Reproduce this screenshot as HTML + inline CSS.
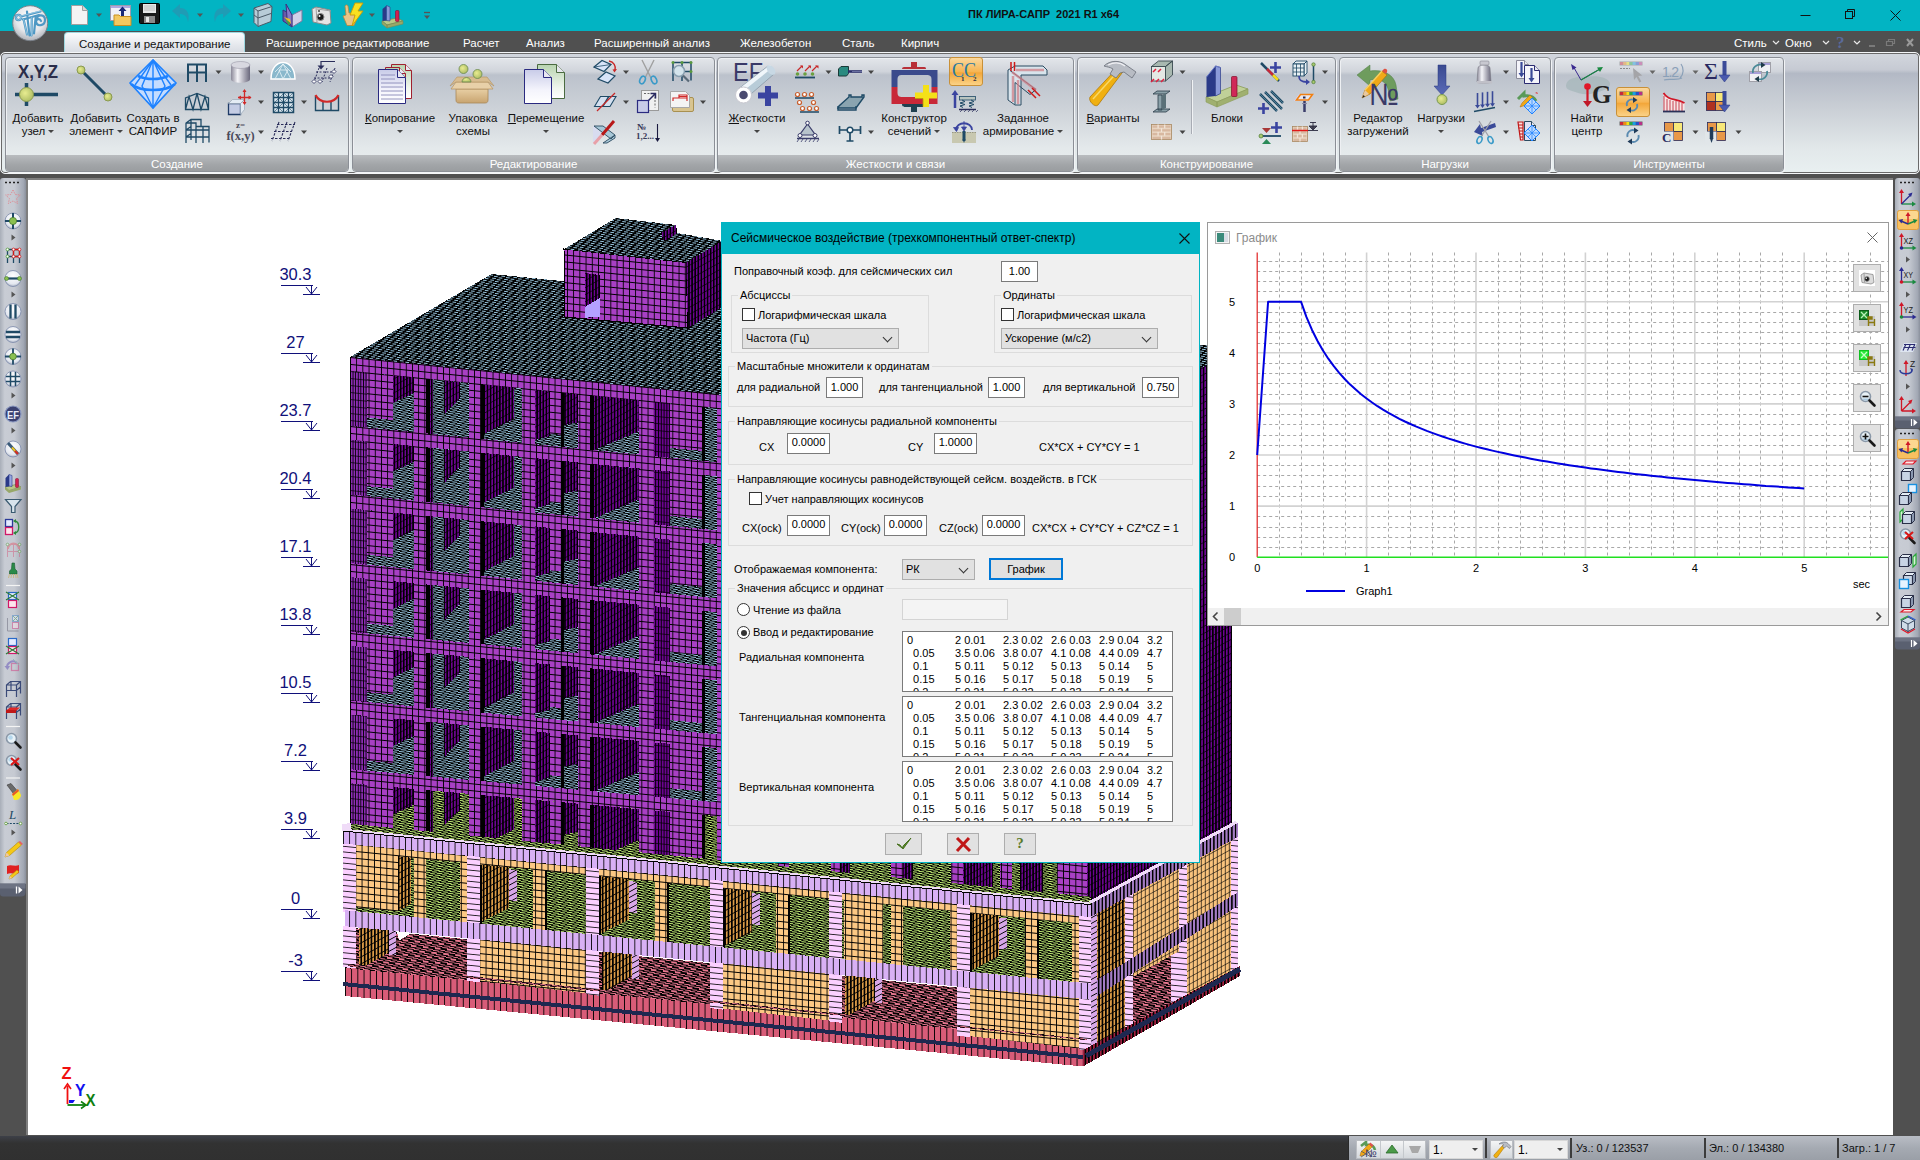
<!DOCTYPE html>
<html lang="ru"><head><meta charset="utf-8"><title>ПК ЛИРА-САПР 2021 R1 x64</title>
<style>
*{box-sizing:border-box}
html,body{margin:0;padding:0}
body{width:1920px;height:1160px;position:relative;overflow:hidden;background:#505050;font-family:"Liberation Sans",sans-serif;font-size:11.5px;color:#000}
.a{position:absolute}
#title{left:0;top:0;width:1920px;height:31px;background:#02b4c3}
#title .cap{left:968px;top:8px;font-weight:bold;font-size:11px;color:#111;white-space:pre}
#tabs{left:0;top:31px;width:1920px;height:22px;background:#505050}
.tab{position:absolute;top:6px;color:#fff;font-size:11.5px;white-space:nowrap}
#tab0{left:64px;top:1px;width:181px;height:22px;border-radius:4px 4px 0 0;background:linear-gradient(#fbfcfd,#e4e7ec 60%,#d6dae1);border:1px solid #9fd8e0;border-bottom:none;color:#111;font-size:11.5px;padding:5px 0 0 14px;white-space:nowrap}
#ribbon{left:0;top:52px;width:1920px;height:122px;border-radius:5px;background:linear-gradient(#d3d7de 0,#c6cad3 14%,#b3b9c5 17%,#c9ced5 45%,#e2e8ea 80%,#e9f0f1 100%);border:1px solid #f4f6f8;box-shadow:0 0 0 1px #6a6a6a inset}
.grp{position:absolute;top:4px;height:115px;border-radius:4px;border:1px solid #8b8f96;background:linear-gradient(#e3e6ea 0,#d0d4db 12%,#bcc2cc 15%,#cdd2d8 45%,#e4e9eb 80%,#e8eeef 100%);box-shadow:1px 1px 0 #f2f4f6, inset 1px 1px 0 #eef0f3;overflow:hidden}
.grp .lbl{position:absolute;left:0;right:0;bottom:0;height:16px;background:linear-gradient(#b9bcbf,#a2a5a8 60%,#9a9da0);color:#fff;text-align:center;font-size:11.5px;line-height:18px}
.rt{position:absolute;font-size:11.5px;color:#111;text-align:center;line-height:13px;white-space:nowrap}
.rt .dd{position:static;display:inline-block;margin:0 0 1px 3px;vertical-align:middle}
.dd{position:absolute;width:0;height:0;border-left:3px solid transparent;border-right:3px solid transparent;border-top:3.5px solid #444}
#ltb{left:0;top:178px;width:26px;height:706px;background:linear-gradient(90deg,#a8aeb8,#c8ccd4 18%,#c6cad2 55%,#a2a8b4 90%,#8a909c);border-radius:3px 3px 0 0}
#canvas{left:26px;top:178px;width:1867px;height:957px;background:#fff;border-left:2px solid #7e7e7e;border-top:2px solid #7e7e7e;overflow:hidden}
.rtb{position:absolute;left:1895px;width:25px;background:linear-gradient(90deg,#a8aeb8,#c8ccd4 18%,#c6cad2 55%,#a2a8b4 90%,#8a909c);border-radius:3px 3px 0 0}
#status{left:0;top:1136px;width:1920px;height:24px;background:linear-gradient(#3d4048,#323232 30%,#303030)}
#sright{left:1348px;top:0;width:572px;height:24px;background:linear-gradient(#b9bdc5,#a5aab2 50%,#9a9fa7);border-left:1px solid #2a2a2a}
.sbtn{position:absolute;top:4px;height:19px;background:linear-gradient(#f4f5f6,#d4d8dc);border:1px solid #babdc2}
.scmb{position:absolute;top:4px;height:19px;width:54px;background:#efefef;border:1px solid #d8d8d8;font-size:12px;padding:2px 0 0 3px}
.ssep{position:absolute;top:2px;width:2px;height:20px;background:#3c3c3c}
.stxt{position:absolute;top:6px;font-size:11px;color:#111;white-space:nowrap}
/* dialog */
#dlg{left:721px;top:222px;width:479px;height:641px;background:#f0f0f0;border:1px solid #02b4c3;font-size:11px;color:#000}
#dlg .tb{position:absolute;left:0;top:0;width:477px;height:31px;background:#02b4c3}
#dlg .tb span{position:absolute;left:9px;top:8px;font-size:12px;white-space:nowrap}
.t{position:absolute;white-space:nowrap;font-size:11px}
.gb{position:absolute;border:1px solid #dcdcdc}
.gb>i{position:absolute;top:-7px;left:5px;background:#f0f0f0;padding:0 2px;font-style:normal;white-space:nowrap}
.ed{position:absolute;background:#fff;border:1px solid #7a7a7a;height:21px;font-size:11px;text-align:center;padding-top:3px}
.cb{position:absolute;width:13px;height:13px;background:#fff;border:1px solid #333}
.cmb{position:absolute;height:21px;background:#e1e1e1;border:1px solid #adadad;padding:3px 0 0 3px;white-space:nowrap}
.cmb:after{content:"";position:absolute;right:7px;top:5px;width:6px;height:6px;border-right:1px solid #333;border-bottom:1px solid #333;transform:rotate(45deg)}
.rad{position:absolute;width:13px;height:13px;border-radius:50%;background:#fff;border:1px solid #333}
.rad.on:after{content:"";position:absolute;left:2.5px;top:2.5px;width:6px;height:6px;border-radius:50%;background:#333}
.ta{position:absolute;left:181px;width:270px;height:62px;background:#fff;border:1px solid #7a7a7a;overflow:hidden;font-size:11px;line-height:13px;white-space:pre}
.ta span{position:absolute;white-space:pre}
.btn{position:absolute;height:21px;background:#e1e1e1;border:1px solid #adadad}
/* graph */
#gr{left:1207px;top:222px;width:682px;height:404px;background:#fff;border:1px solid #9a9a9a}
.gbtn{position:absolute;background:#e1e1e1;border:1px solid #adadad;line-height:0}
</style></head><body>
<div id="title" class="a"><span class="a cap">ПК ЛИРА-САПР  2021 R1 x64</span>
<svg class="a" style="left:1790px;top:0" width="130" height="31" viewBox="0 0 130 31" fill="none" stroke="#111" stroke-width="1"><path d="M10.5 15.5h10"/><rect x="55.5" y="11.5" width="7" height="7"/><path d="M57.5 11.5v-2h7v7h-2"/><path d="M100.5 10.5l10 10M110.5 10.5l-10 10"/></svg>
</div>
<div id="tabs" class="a">
<div id="tab0" class="a">Создание и редактирование</div>
<span class="tab" style="left:266px">Расширенное редактирование</span>
<span class="tab" style="left:463px">Расчет</span>
<span class="tab" style="left:526px">Анализ</span>
<span class="tab" style="left:594px">Расширенный анализ</span>
<span class="tab" style="left:740px">Железобетон</span>
<span class="tab" style="left:842px">Сталь</span>
<span class="tab" style="left:901px">Кирпич</span>
<span class="tab" style="left:1734px">Стиль</span>
<span class="tab" style="left:1785px">Окно</span>
<svg class="a" style="left:1770px;top:3px" width="150" height="18" viewBox="0 0 150 18" fill="none" stroke="#e8e8e8" stroke-width="1.2"><path d="M3 7l3 3 3-3M53 7l3 3 3-3M84 7l3 3 3-3"/><text x="66" y="14" font-family="Liberation Serif,serif" font-weight="bold" font-size="17" fill="#5a6a9a" stroke="none">?</text><path d="M99 12h6" stroke="#7a7a7a" stroke-width="2"/><path d="M116.500 7.500h6v4h-6zM118.500 7.500v-2h6v4h-2" stroke="#7a7a7a"/><path d="M137 5l6 7M143 5l-6 7" stroke="#9a9a9a" stroke-width="2"/></svg>
</div>
<div id="ribbon" class="a">
 <div class="grp" style="left:4px;width:344px"><div class="lbl">Создание</div></div>
 <div class="grp" style="left:351px;width:363px"><div class="lbl">Редактирование</div></div>
 <div class="grp" style="left:716px;width:357px"><div class="lbl">Жесткости и связи</div></div>
 <div class="grp" style="left:1076px;width:259px"><div class="lbl">Конструирование</div></div>
 <div class="grp" style="left:1338px;width:212px"><div class="lbl">Нагрузки</div></div>
 <div class="grp" style="left:1553px;width:230px"><div class="lbl">Инструменты</div></div>
 <div class="rt" style="left:-13px;top:59px;width:100px">Добавить<br>узел<i class="dd"></i></div>
 <div class="rt" style="left:45px;top:59px;width:100px">Добавить<br>элемент<i class="dd"></i></div>
 <div class="rt" style="left:102px;top:59px;width:100px">Создать в<br>САПФИР</div>
 <div class="rt" style="left:349px;top:59px;width:100px"><u>К</u>опирование</div><i class="dd" style="left:396px;top:77px"></i>
 <div class="rt" style="left:422px;top:59px;width:100px">Упаковка<br>схемы</div>
 <div class="rt" style="left:495px;top:59px;width:100px"><u>П</u>еремещение</div><i class="dd" style="left:542px;top:77px"></i>
 <div class="rt" style="left:706px;top:59px;width:100px"><u>Ж</u>есткости</div><i class="dd" style="left:753px;top:77px"></i>
 <div class="rt" style="left:863px;top:59px;width:100px">Конструктор<br>сечений<i class="dd"></i></div>
 <div class="rt" style="left:972px;top:59px;width:100px">Заданное<br>армирование<i class="dd"></i></div>
 <div class="rt" style="left:1062px;top:59px;width:100px"><u>В</u>арианты</div>
 <div class="rt" style="left:1176px;top:59px;width:100px">Блоки</div>
 <div class="rt" style="left:1327px;top:59px;width:100px">Редактор<br>загружений</div>
 <div class="rt" style="left:1390px;top:59px;width:100px">Нагрузки</div><i class="dd" style="left:1437px;top:77px"></i>
 <div class="rt" style="left:1536px;top:59px;width:100px">Найти<br>центр</div>
</div>
<div id="ltb" class="a"></div>
<div class="rtb" style="top:178px;height:240px"></div>
<div class="rtb" style="top:429px;height:210px"></div>
<div id="status" class="a"><div id="sright" class="a">
 <div class="sbtn" style="left:7px;width:70px"><svg width="68" height="17" viewBox="0 0 68 17"><path d="M23.500 0v17M46.500 0v17" stroke="#c4c8cc"/><path d="M4 5l5-4v3c5-1 8 1 9 5" fill="none" stroke="#5a9a58" stroke-width="2.600"/><path d="M3 15l1-4 8-8 3 3-8 8z" fill="#f0a818" stroke="#a86808" stroke-width=".5"/><path d="M12 3l1.500-1.500 3 3-1.500 1.500z" fill="#e05050"/><path d="M4 10l10 6M14 10l-10 6" stroke="#555" stroke-width=".8"/><text x="8" y="16" font-size="11" fill="#3a3a68" font-family="Liberation Sans,sans-serif" textLength="11">№</text><path d="M35 4l6 8h-12z" fill="#4a9a48" stroke="#2a6a28" stroke-width=".8"/><path d="M52 5h12l-3 7h-6z" fill="#a8a8a8"/></svg></div>
 <div class="scmb" style="left:80px">1.<i class="dd" style="left:42px;top:7px"></i></div>
 <div class="ssep" style="left:136px"></div>
 <div class="sbtn" style="left:141px;width:23px"><svg width="21" height="17" viewBox="0 0 21 17"><path d="M3 14l9-10 2 1.500-8 11c-1 1-4-1-3-2.500z" fill="#f0b010" stroke="#b07808" stroke-width=".6"/><path d="M8 3c3-2.500 7-2.500 9-.5l3 3-1.500 2-3-2.500-2 2-2-1.500 1-2c-1-1-3-.8-4.500-.5z" fill="#b8bcc4" stroke="#6a6e78" stroke-width=".6"/></svg></div>
 <div class="scmb" style="left:165px">1.<i class="dd" style="left:42px;top:7px"></i></div>
 <div class="ssep" style="left:221px"></div>
 <span class="stxt" style="left:227px">Уз.: 0 / 123537</span>
 <div class="ssep" style="left:355px"></div>
 <span class="stxt" style="left:360px">Эл.: 0 / 134380</span>
 <div class="ssep" style="left:488px"></div>
 <span class="stxt" style="left:493px">Загр.: 1 / 7</span>
</div></div>
<div id="canvas" class="a">
<svg class="a" style="left:0;top:0" width="1865" height="955" viewBox="28 180 1865 955" shape-rendering="crispEdges">
<defs>
<pattern id="pL" width="6.2" height="6.9" patternUnits="userSpaceOnUse" patternTransform="matrix(1 .101 0 1 350 357)"><rect width="6.2" height="6.9" fill="#a840c4"/><path d="M0 .5H6.2M.5 0V6.9" stroke="#000" stroke-width="1"/></pattern>
<pattern id="pD" width="3.1" height="7" patternUnits="userSpaceOnUse" patternTransform="matrix(1 -.55 0 1 0 0)"><rect width="3.1" height="7" fill="#6c0490"/><path d="M.8 0V7" stroke="#000" stroke-width="1.35"/><path d="M0 .5H3.1" stroke="#000" stroke-width=".7"/></pattern>
<pattern id="pDf" width="2.6" height="7" patternUnits="userSpaceOnUse" patternTransform="matrix(1 .101 0 1 350 357)"><rect width="2.6" height="7" fill="#8c2cb4"/><path d="M.7 0V7" stroke="#000" stroke-width="1.1"/><path d="M0 .5H2.6" stroke="#000" stroke-width=".7"/></pattern>
<pattern id="pDf2" width="2.8" height="7" patternUnits="userSpaceOnUse" patternTransform="matrix(1 .101 0 1 350 357)"><rect width="2.8" height="7" fill="#6c0490"/><path d="M.7 0V7" stroke="#000" stroke-width="1.2"/><path d="M0 .5H2.800" stroke="#000" stroke-width=".7"/></pattern>
<pattern id="pR" width="12" height="12" patternUnits="userSpaceOnUse" patternTransform="matrix(1 0.103 0 1 350 357)"><rect width="12" height="12" fill="#000"/><g fill="#98c4dc"><rect x="0" y="0" width="3.72" height="1"/><rect x="5" y="1" width="3.72" height="1"/><rect x="10" y="2" width="2.00" height="1"/><rect x="0" y="2" width="1.72" height="1"/><rect x="3" y="3" width="3.72" height="1"/><rect x="8" y="4" width="3.72" height="1"/><rect x="1" y="5" width="3.72" height="1"/><rect x="6" y="6" width="3.72" height="1"/><rect x="11" y="7" width="1.00" height="1"/><rect x="0" y="7" width="2.72" height="1"/><rect x="4" y="8" width="3.72" height="1"/><rect x="9" y="9" width="3.00" height="1"/><rect x="0" y="9" width="0.72" height="1"/><rect x="2" y="10" width="3.72" height="1"/><rect x="7" y="11" width="3.72" height="1"/></g></pattern>
<pattern id="pRf" width="12" height="12" patternUnits="userSpaceOnUse" patternTransform="matrix(1 0.101 0 1 350 357)"><rect width="12" height="12" fill="#000"/><g fill="#98c4dc"><rect x="0" y="0" width="5.04" height="1"/><rect x="5" y="1" width="5.04" height="1"/><rect x="10" y="2" width="2.00" height="1"/><rect x="0" y="2" width="3.04" height="1"/><rect x="3" y="3" width="5.04" height="1"/><rect x="8" y="4" width="4.00" height="1"/><rect x="0" y="4" width="1.04" height="1"/><rect x="1" y="5" width="5.04" height="1"/><rect x="6" y="6" width="5.04" height="1"/><rect x="11" y="7" width="1.00" height="1"/><rect x="0" y="7" width="4.04" height="1"/><rect x="4" y="8" width="5.04" height="1"/><rect x="9" y="9" width="3.00" height="1"/><rect x="0" y="9" width="2.04" height="1"/><rect x="2" y="10" width="5.04" height="1"/><rect x="7" y="11" width="5.00" height="1"/><rect x="0" y="11" width="0.04" height="1"/></g></pattern>
<pattern id="pG" width="12" height="12" patternUnits="userSpaceOnUse" patternTransform="matrix(1 0.1 0 1 350 357)"><rect width="12" height="12" fill="#000"/><g fill="#c4f078"><rect x="0" y="0" width="5.16" height="1"/><rect x="5" y="1" width="5.16" height="1"/><rect x="10" y="2" width="2.00" height="1"/><rect x="0" y="2" width="3.16" height="1"/><rect x="3" y="3" width="5.16" height="1"/><rect x="8" y="4" width="4.00" height="1"/><rect x="0" y="4" width="1.16" height="1"/><rect x="1" y="5" width="5.16" height="1"/><rect x="6" y="6" width="5.16" height="1"/><rect x="11" y="7" width="1.00" height="1"/><rect x="0" y="7" width="4.16" height="1"/><rect x="4" y="8" width="5.16" height="1"/><rect x="9" y="9" width="3.00" height="1"/><rect x="0" y="9" width="2.16" height="1"/><rect x="2" y="10" width="5.16" height="1"/><rect x="7" y="11" width="5.00" height="1"/><rect x="0" y="11" width="0.16" height="1"/></g></pattern>
<pattern id="pF" width="12" height="14.4" patternUnits="userSpaceOnUse" patternTransform="matrix(1 0.1 0 1 350 357)"><rect width="12" height="14.4" fill="#000"/><g fill="#e87890"><rect x="0" y="0" width="5.40" height="1.2"/><rect x="5" y="1.2" width="5.40" height="1.2"/><rect x="10" y="2.4" width="2.00" height="1.2"/><rect x="0" y="2.4" width="3.40" height="1.2"/><rect x="3" y="3.6" width="5.40" height="1.2"/><rect x="8" y="4.8" width="4.00" height="1.2"/><rect x="0" y="4.8" width="1.40" height="1.2"/><rect x="1" y="6" width="5.40" height="1.2"/><rect x="6" y="7.2" width="5.40" height="1.2"/><rect x="11" y="8.4" width="1.00" height="1.2"/><rect x="0" y="8.4" width="4.40" height="1.2"/><rect x="4" y="9.6" width="5.40" height="1.2"/><rect x="9" y="10.8" width="3.00" height="1.2"/><rect x="0" y="10.8" width="2.40" height="1.2"/><rect x="2" y="12" width="5.40" height="1.2"/><rect x="7" y="13.2" width="5.00" height="1.2"/><rect x="0" y="13.2" width="0.40" height="1.2"/></g></pattern>
<pattern id="pO" width="6.2" height="6.9" patternUnits="userSpaceOnUse" patternTransform="matrix(1 .1 0 1 343 829)"><rect width="6.2" height="6.9" fill="#fcc884"/><path d="M0 .5H6.2M.5 0V6.900" stroke="#000" stroke-width="1"/></pattern>
<pattern id="pOs" width="3.4" height="7" patternUnits="userSpaceOnUse" patternTransform="matrix(1 -.55 0 1 0 0)"><rect width="3.4" height="7" fill="#dc9c48"/><path d="M.8 0V7" stroke="#000" stroke-width="1.5"/><path d="M0 .5H3.400" stroke="#000" stroke-width=".9"/></pattern>
<pattern id="pOs2" width="4" height="7" patternUnits="userSpaceOnUse" patternTransform="matrix(1 -.55 0 1 0 0)"><rect width="4" height="7" fill="#f8c27c"/><path d="M.8 0V7" stroke="#000" stroke-width=".85"/><path d="M0 .5H4" stroke="#000" stroke-width=".6"/></pattern>
<pattern id="pP" width="13" height="5.6" patternUnits="userSpaceOnUse" patternTransform="matrix(1 .1 0 1 343 829)"><rect width="13" height="5.6" fill="#fbd0ff"/><path d="M0 .5H13" stroke="#000" stroke-width=".85"/></pattern>
<pattern id="pB" width="6.2" height="20" patternUnits="userSpaceOnUse" patternTransform="matrix(1 .1 0 1 343 829)"><rect width="6.2" height="20" fill="#d8b0f4"/><path d="M.5 0V20" stroke="#000" stroke-width=".95"/></pattern>
<pattern id="pBs" width="3.6" height="20" patternUnits="userSpaceOnUse" patternTransform="matrix(1 -.55 0 1 0 0)"><rect width="3.6" height="20" fill="#a47cc4"/><path d="M.7 0V20" stroke="#000" stroke-width="1.3"/></pattern>
<pattern id="pPs" width="8" height="5.6" patternUnits="userSpaceOnUse" patternTransform="matrix(1 -.55 0 1 0 0)"><rect width="8" height="5.6" fill="#d8a8e8"/><path d="M0 .5H8" stroke="#000" stroke-width="1.1"/></pattern>
<pattern id="pFd" width="6.2" height="30" patternUnits="userSpaceOnUse" patternTransform="matrix(1 .1 0 1 345 968)"><rect width="6.2" height="30" fill="#d85c78"/><path d="M.5 0V30" stroke="#000" stroke-width="1.1"/></pattern>
<pattern id="pFs" width="3.4" height="30" patternUnits="userSpaceOnUse" patternTransform="matrix(1 -.58 0 1 0 0)"><rect width="3.4" height="30" fill="#a02040"/><path d="M.7 0V30" stroke="#000" stroke-width="1.3"/></pattern>
</defs>
<polygon points="1087.0,433.0 1232.0,350.5 1232.0,830.0 1087.0,908.0" fill="url(#pD)"/>
<polygon points="350.0,357.0 491.5,274.0 1232.0,348.0 1232.0,350.5 1087.0,433.0" fill="url(#pR)"/>
<polygon points="564.0,249.0 686.0,262.5 688.0,328.0 565.0,317.0" fill="url(#pL)" stroke="#000" stroke-width="1"/>
<polygon points="686.0,262.5 740.0,230.5 740.0,296.0 688.0,328.0" fill="url(#pD)"/>
<polygon points="564.0,249.0 616.0,218.0 676.0,225.0 677.5,233.0 740.0,244.0 740.0,230.5 686.0,262.5" fill="url(#pR)"/>
<polygon points="661.0,233.0 676.0,225.0 677.5,233.0 664.0,241.0" fill="url(#pD)"/>
<polygon points="585.0,273.0 600.0,275.0 600.0,317.0 585.0,318.0" fill="url(#pD)"/>
<polygon points="585.0,307.0 600.0,298.0 600.0,316.7 585.0,317.7" fill="#b4a0ff"/>
<polygon points="350.0,357.0 1087.0,432.0 1087.0,903.0 350.0,837.9" fill="url(#pL)"/>
<polygon points="351.0,371.1 1087.0,445.7 1087.0,499.3 351.0,425.8" fill="url(#pRf)"/>
<polygon points="351.0,371.1 367.0,372.7 367.0,427.4 351.0,425.8" fill="url(#pDf)"/>
<polygon points="367.0,372.7 393.0,375.4 393.0,420.0 367.0,417.4" fill="url(#pL)"/>
<polygon points="393.0,375.4 414.0,377.5 414.0,392.9 393.0,403.0" fill="url(#pD)"/>
<polygon points="414.0,377.5 426.0,378.7 426.0,433.3 414.0,432.1" fill="url(#pL)"/>
<polygon points="426.0,378.7 430.0,379.1 430.0,433.7 426.0,433.3" fill="#000"/>
<polygon points="430.0,379.1 433.0,379.4 433.0,434.0 430.0,433.7" fill="url(#pD)"/>
<polygon points="444.0,380.5 460.0,382.2 460.0,398.2 444.0,414.5" fill="url(#pD)"/>
<polygon points="469.0,383.1 481.0,384.3 481.0,438.8 469.0,437.6" fill="url(#pL)"/>
<polygon points="481.0,384.3 484.0,384.6 484.0,439.1 481.0,438.8" fill="#000"/>
<polygon points="484.0,384.6 514.0,387.6 514.0,419.1 484.0,434.1" fill="url(#pD)"/>
<polygon points="522.0,388.4 534.5,389.7 534.5,444.1 522.0,442.9" fill="url(#pL)"/>
<polygon points="534.5,389.7 550.0,391.3 550.0,436.1 534.5,440.1" fill="url(#pD)"/>
<polygon points="550.0,391.3 561.0,392.4 561.0,434.8 550.0,433.7" fill="url(#pL)"/>
<polygon points="561.0,392.4 564.0,392.7 564.0,447.1 561.0,446.8" fill="#000"/>
<polygon points="564.0,392.7 578.0,394.1 578.0,422.3 564.0,425.1" fill="url(#pD)"/>
<polygon points="578.0,394.1 590.0,395.3 590.0,449.7 578.0,448.5" fill="url(#pL)"/>
<polygon points="590.0,395.3 594.0,395.7 594.0,450.1 590.0,449.7" fill="#000"/>
<polygon points="594.0,395.7 639.0,400.3 639.0,431.2 594.0,450.1" fill="url(#pD)"/>
<polygon points="639.0,400.3 654.0,401.8 654.0,456.1 639.0,454.6" fill="url(#pL)"/>
<polygon points="654.0,401.8 670.0,403.5 670.0,457.7 654.0,456.1" fill="url(#pDf2)"/>
<polygon points="670.0,403.5 702.0,406.7 702.0,451.0 670.0,447.8" fill="url(#pL)"/>
<polygon points="702.0,406.7 705.0,407.0 705.0,461.2 702.0,460.9" fill="#000"/>
<polygon points="717.0,408.2 729.0,409.4 729.0,463.6 717.0,462.4" fill="url(#pL)"/>
<polygon points="778.0,414.4 789.0,415.5 789.0,469.5 778.0,468.4" fill="url(#pL)"/>
<polygon points="831.0,419.8 840.0,420.7 840.0,474.6 831.0,473.7" fill="url(#pL)"/>
<polygon points="840.0,420.7 850.0,421.7 850.0,475.6 840.0,474.6" fill="url(#pD)"/>
<polygon points="891.0,425.9 903.0,427.1 903.0,480.9 891.0,479.7" fill="url(#pL)"/>
<polygon points="903.0,427.1 913.0,428.1 913.0,481.9 903.0,480.9" fill="url(#pD)"/>
<polygon points="951.0,431.9 963.0,433.2 963.0,486.9 951.0,485.7" fill="url(#pL)"/>
<polygon points="963.0,433.2 993.0,436.2 993.0,489.9 963.0,486.9" fill="url(#pD)"/>
<polygon points="1000.0,436.9 1012.0,438.1 1012.0,491.8 1000.0,490.6" fill="url(#pL)"/>
<polygon points="1020.0,438.9 1043.0,441.3 1043.0,494.9 1020.0,492.6" fill="url(#pD)"/>
<polygon points="1057.0,442.7 1075.0,444.5 1075.0,498.1 1057.0,496.3" fill="url(#pL)"/>
<polygon points="1075.0,444.5 1087.0,445.7 1087.0,499.3 1075.0,498.1" fill="url(#pL)"/>
<polygon points="351.0,439.8 1087.0,513.0 1087.0,566.6 351.0,494.5" fill="url(#pRf)"/>
<polygon points="351.0,439.8 367.0,441.4 367.0,496.1 351.0,494.5" fill="url(#pDf)"/>
<polygon points="367.0,441.4 393.0,444.0 393.0,488.6 367.0,486.1" fill="url(#pL)"/>
<polygon points="393.0,444.0 414.0,446.1 414.0,461.5 393.0,471.6" fill="url(#pD)"/>
<polygon points="414.0,446.1 426.0,447.3 426.0,501.8 414.0,500.7" fill="url(#pL)"/>
<polygon points="426.0,447.3 430.0,447.7 430.0,502.2 426.0,501.8" fill="#000"/>
<polygon points="430.0,447.7 433.0,448.0 433.0,502.5 430.0,502.2" fill="url(#pD)"/>
<polygon points="444.0,449.1 460.0,450.6 460.0,466.6 444.0,483.1" fill="url(#pD)"/>
<polygon points="469.0,451.5 481.0,452.7 481.0,507.2 469.0,506.1" fill="url(#pL)"/>
<polygon points="481.0,452.7 484.0,453.0 484.0,507.5 481.0,507.2" fill="#000"/>
<polygon points="484.0,453.0 514.0,456.0 514.0,487.5 484.0,502.5" fill="url(#pD)"/>
<polygon points="522.0,456.8 534.5,458.1 534.5,512.5 522.0,511.2" fill="url(#pL)"/>
<polygon points="534.5,458.1 550.0,459.6 550.0,504.4 534.5,508.5" fill="url(#pD)"/>
<polygon points="550.0,459.6 561.0,460.7 561.0,503.1 550.0,502.1" fill="url(#pL)"/>
<polygon points="561.0,460.7 564.0,461.0 564.0,515.4 561.0,515.1" fill="#000"/>
<polygon points="564.0,461.0 578.0,462.4 578.0,490.5 564.0,493.4" fill="url(#pD)"/>
<polygon points="578.0,462.4 590.0,463.6 590.0,517.9 578.0,516.7" fill="url(#pL)"/>
<polygon points="590.0,463.6 594.0,464.0 594.0,518.3 590.0,517.9" fill="#000"/>
<polygon points="594.0,464.0 639.0,468.5 639.0,499.3 594.0,518.3" fill="url(#pD)"/>
<polygon points="639.0,468.5 654.0,469.9 654.0,524.2 639.0,522.7" fill="url(#pL)"/>
<polygon points="654.0,469.9 670.0,471.5 670.0,525.7 654.0,524.2" fill="url(#pDf2)"/>
<polygon points="670.0,471.5 702.0,474.7 702.0,519.0 670.0,515.8" fill="url(#pL)"/>
<polygon points="702.0,474.7 705.0,475.0 705.0,529.2 702.0,528.9" fill="#000"/>
<polygon points="717.0,476.2 729.0,477.4 729.0,531.5 717.0,530.3" fill="url(#pL)"/>
<polygon points="778.0,482.3 789.0,483.4 789.0,537.4 778.0,536.3" fill="url(#pL)"/>
<polygon points="831.0,487.6 840.0,488.4 840.0,542.4 831.0,541.5" fill="url(#pL)"/>
<polygon points="840.0,488.4 850.0,489.4 850.0,543.4 840.0,542.4" fill="url(#pD)"/>
<polygon points="891.0,493.5 903.0,494.7 903.0,548.6 891.0,547.4" fill="url(#pL)"/>
<polygon points="903.0,494.7 913.0,495.7 913.0,549.5 903.0,548.6" fill="url(#pD)"/>
<polygon points="951.0,499.5 963.0,500.7 963.0,554.4 951.0,553.3" fill="url(#pL)"/>
<polygon points="963.0,500.7 993.0,503.7 993.0,557.4 963.0,554.4" fill="url(#pD)"/>
<polygon points="1000.0,504.4 1012.0,505.6 1012.0,559.2 1000.0,558.1" fill="url(#pL)"/>
<polygon points="1020.0,506.4 1043.0,508.6 1043.0,562.3 1020.0,560.0" fill="url(#pD)"/>
<polygon points="1057.0,510.0 1075.0,511.8 1075.0,565.4 1057.0,563.7" fill="url(#pL)"/>
<polygon points="1075.0,511.8 1087.0,513.0 1087.0,566.6 1075.0,565.4" fill="url(#pL)"/>
<polygon points="351.0,508.5 1087.0,580.3 1087.0,633.9 351.0,563.2" fill="url(#pRf)"/>
<polygon points="351.0,508.5 367.0,510.1 367.0,564.7 351.0,563.2" fill="url(#pDf)"/>
<polygon points="367.0,510.1 393.0,512.6 393.0,557.2 367.0,554.7" fill="url(#pL)"/>
<polygon points="393.0,512.6 414.0,514.6 414.0,530.1 393.0,540.2" fill="url(#pD)"/>
<polygon points="414.0,514.6 426.0,515.8 426.0,570.4 414.0,569.2" fill="url(#pL)"/>
<polygon points="426.0,515.8 430.0,516.2 430.0,570.8 426.0,570.4" fill="#000"/>
<polygon points="430.0,516.2 433.0,516.5 433.0,571.1 430.0,570.8" fill="url(#pD)"/>
<polygon points="444.0,517.6 460.0,519.1 460.0,535.1 444.0,551.6" fill="url(#pD)"/>
<polygon points="469.0,520.0 481.0,521.2 481.0,575.7 469.0,574.5" fill="url(#pL)"/>
<polygon points="481.0,521.2 484.0,521.5 484.0,576.0 481.0,575.7" fill="#000"/>
<polygon points="484.0,521.5 514.0,524.4 514.0,555.8 484.0,571.0" fill="url(#pD)"/>
<polygon points="522.0,525.2 534.5,526.4 534.5,580.8 522.0,579.6" fill="url(#pL)"/>
<polygon points="534.5,526.4 550.0,527.9 550.0,572.7 534.5,576.8" fill="url(#pD)"/>
<polygon points="550.0,527.9 561.0,529.0 561.0,571.4 550.0,570.4" fill="url(#pL)"/>
<polygon points="561.0,529.0 564.0,529.3 564.0,583.7 561.0,583.4" fill="#000"/>
<polygon points="564.0,529.3 578.0,530.6 578.0,558.8 564.0,561.7" fill="url(#pD)"/>
<polygon points="578.0,530.6 590.0,531.8 590.0,586.1 578.0,585.0" fill="url(#pL)"/>
<polygon points="590.0,531.8 594.0,532.2 594.0,586.5 590.0,586.1" fill="#000"/>
<polygon points="594.0,532.2 639.0,536.6 639.0,567.5 594.0,586.5" fill="url(#pD)"/>
<polygon points="639.0,536.6 654.0,538.1 654.0,592.3 639.0,590.9" fill="url(#pL)"/>
<polygon points="654.0,538.1 670.0,539.6 670.0,593.8 654.0,592.3" fill="url(#pDf2)"/>
<polygon points="670.0,539.6 702.0,542.7 702.0,587.0 670.0,583.9" fill="url(#pL)"/>
<polygon points="702.0,542.7 705.0,543.0 705.0,597.2 702.0,596.9" fill="#000"/>
<polygon points="717.0,544.2 729.0,545.4 729.0,599.5 717.0,598.3" fill="url(#pL)"/>
<polygon points="778.0,550.2 789.0,551.2 789.0,605.3 778.0,604.2" fill="url(#pL)"/>
<polygon points="831.0,555.3 840.0,556.2 840.0,610.2 831.0,609.3" fill="url(#pL)"/>
<polygon points="840.0,556.2 850.0,557.2 850.0,611.1 840.0,610.2" fill="url(#pD)"/>
<polygon points="891.0,561.2 903.0,562.4 903.0,616.2 891.0,615.1" fill="url(#pL)"/>
<polygon points="903.0,562.4 913.0,563.3 913.0,617.2 903.0,616.2" fill="url(#pD)"/>
<polygon points="951.0,567.0 963.0,568.2 963.0,622.0 951.0,620.8" fill="url(#pL)"/>
<polygon points="963.0,568.2 993.0,571.1 993.0,624.8 963.0,622.0" fill="url(#pD)"/>
<polygon points="1000.0,571.8 1012.0,573.0 1012.0,626.7 1000.0,625.5" fill="url(#pL)"/>
<polygon points="1020.0,573.8 1043.0,576.0 1043.0,629.6 1020.0,627.4" fill="url(#pD)"/>
<polygon points="1057.0,577.4 1075.0,579.1 1075.0,632.7 1057.0,631.0" fill="url(#pL)"/>
<polygon points="1075.0,579.1 1087.0,580.3 1087.0,633.9 1075.0,632.7" fill="url(#pL)"/>
<polygon points="351.0,577.2 1087.0,647.6 1087.0,701.2 351.0,631.9" fill="url(#pRf)"/>
<polygon points="351.0,577.2 367.0,578.7 367.0,633.4 351.0,631.9" fill="url(#pDf)"/>
<polygon points="367.0,578.7 393.0,581.2 393.0,625.9 367.0,623.4" fill="url(#pL)"/>
<polygon points="393.0,581.2 414.0,583.2 414.0,598.6 393.0,608.8" fill="url(#pD)"/>
<polygon points="414.0,583.2 426.0,584.4 426.0,639.0 414.0,637.8" fill="url(#pL)"/>
<polygon points="426.0,584.4 430.0,584.8 430.0,639.3 426.0,639.0" fill="#000"/>
<polygon points="430.0,584.8 433.0,585.0 433.0,639.6 430.0,639.3" fill="url(#pD)"/>
<polygon points="444.0,586.1 460.0,587.6 460.0,603.6 444.0,620.1" fill="url(#pD)"/>
<polygon points="469.0,588.5 481.0,589.6 481.0,644.1 469.0,643.0" fill="url(#pL)"/>
<polygon points="481.0,589.6 484.0,589.9 484.0,644.4 481.0,644.1" fill="#000"/>
<polygon points="484.0,589.9 514.0,592.8 514.0,624.2 484.0,639.4" fill="url(#pD)"/>
<polygon points="522.0,593.5 534.5,594.7 534.5,649.2 522.0,648.0" fill="url(#pL)"/>
<polygon points="534.5,594.7 550.0,596.2 550.0,641.0 534.5,645.2" fill="url(#pD)"/>
<polygon points="550.0,596.2 561.0,597.3 561.0,639.7 550.0,638.7" fill="url(#pL)"/>
<polygon points="561.0,597.3 564.0,597.6 564.0,651.9 561.0,651.7" fill="#000"/>
<polygon points="564.0,597.6 578.0,598.9 578.0,627.1 564.0,629.9" fill="url(#pD)"/>
<polygon points="578.0,598.9 590.0,600.1 590.0,654.4 578.0,653.3" fill="url(#pL)"/>
<polygon points="590.0,600.1 594.0,600.4 594.0,654.8 590.0,654.4" fill="#000"/>
<polygon points="594.0,600.4 639.0,604.7 639.0,635.6 594.0,654.8" fill="url(#pD)"/>
<polygon points="639.0,604.7 654.0,606.2 654.0,660.4 639.0,659.0" fill="url(#pL)"/>
<polygon points="654.0,606.2 670.0,607.7 670.0,661.9 654.0,660.4" fill="url(#pDf2)"/>
<polygon points="670.0,607.7 702.0,610.8 702.0,655.0 670.0,652.0" fill="url(#pL)"/>
<polygon points="702.0,610.8 705.0,611.1 705.0,665.2 702.0,664.9" fill="#000"/>
<polygon points="717.0,612.2 729.0,613.3 729.0,667.5 717.0,666.3" fill="url(#pL)"/>
<polygon points="778.0,618.0 789.0,619.1 789.0,673.1 778.0,672.1" fill="url(#pL)"/>
<polygon points="831.0,623.1 840.0,624.0 840.0,677.9 831.0,677.1" fill="url(#pL)"/>
<polygon points="840.0,624.0 850.0,624.9 850.0,678.9 840.0,677.9" fill="url(#pD)"/>
<polygon points="891.0,628.8 903.0,630.0 903.0,683.8 891.0,682.7" fill="url(#pL)"/>
<polygon points="903.0,630.0 913.0,630.9 913.0,684.8 903.0,683.8" fill="url(#pD)"/>
<polygon points="951.0,634.6 963.0,635.7 963.0,689.5 951.0,688.4" fill="url(#pL)"/>
<polygon points="963.0,635.7 993.0,638.6 993.0,692.3 963.0,689.5" fill="url(#pD)"/>
<polygon points="1000.0,639.3 1012.0,640.4 1012.0,694.1 1000.0,693.0" fill="url(#pL)"/>
<polygon points="1020.0,641.2 1043.0,643.4 1043.0,697.0 1020.0,694.9" fill="url(#pD)"/>
<polygon points="1057.0,644.7 1075.0,646.4 1075.0,700.0 1057.0,698.3" fill="url(#pL)"/>
<polygon points="1075.0,646.4 1087.0,647.6 1087.0,701.2 1075.0,700.0" fill="url(#pL)"/>
<polygon points="351.0,645.9 1087.0,714.9 1087.0,768.4 351.0,700.6" fill="url(#pRf)"/>
<polygon points="351.0,645.9 367.0,647.4 367.0,702.1 351.0,700.6" fill="url(#pDf)"/>
<polygon points="367.0,647.4 393.0,649.8 393.0,694.5 367.0,692.1" fill="url(#pL)"/>
<polygon points="393.0,649.8 414.0,651.8 414.0,667.2 393.0,677.5" fill="url(#pD)"/>
<polygon points="414.0,651.8 426.0,652.9 426.0,707.5 414.0,706.4" fill="url(#pL)"/>
<polygon points="426.0,652.9 430.0,653.3 430.0,707.9 426.0,707.5" fill="#000"/>
<polygon points="430.0,653.3 433.0,653.6 433.0,708.2 430.0,707.9" fill="url(#pD)"/>
<polygon points="444.0,654.6 460.0,656.1 460.0,672.1 444.0,688.6" fill="url(#pD)"/>
<polygon points="469.0,657.0 481.0,658.1 481.0,712.6 469.0,711.5" fill="url(#pL)"/>
<polygon points="481.0,658.1 484.0,658.4 484.0,712.9 481.0,712.6" fill="#000"/>
<polygon points="484.0,658.4 514.0,661.2 514.0,692.6 484.0,707.9" fill="url(#pD)"/>
<polygon points="522.0,661.9 534.5,663.1 534.5,717.5 522.0,716.4" fill="url(#pL)"/>
<polygon points="534.5,663.1 550.0,664.5 550.0,709.4 534.5,713.5" fill="url(#pD)"/>
<polygon points="550.0,664.5 561.0,665.6 561.0,708.0 550.0,707.0" fill="url(#pL)"/>
<polygon points="561.0,665.6 564.0,665.9 564.0,720.2 561.0,720.0" fill="#000"/>
<polygon points="564.0,665.9 578.0,667.2 578.0,695.3 564.0,698.2" fill="url(#pD)"/>
<polygon points="578.0,667.2 590.0,668.3 590.0,722.6 578.0,721.5" fill="url(#pL)"/>
<polygon points="590.0,668.3 594.0,668.7 594.0,723.0 590.0,722.6" fill="#000"/>
<polygon points="594.0,668.7 639.0,672.9 639.0,703.7 594.0,723.0" fill="url(#pD)"/>
<polygon points="639.0,672.9 654.0,674.3 654.0,728.5 639.0,727.1" fill="url(#pL)"/>
<polygon points="654.0,674.3 670.0,675.8 670.0,730.0 654.0,728.5" fill="url(#pDf2)"/>
<polygon points="670.0,675.8 702.0,678.8 702.0,723.0 670.0,720.1" fill="url(#pL)"/>
<polygon points="702.0,678.8 705.0,679.1 705.0,733.2 702.0,732.9" fill="#000"/>
<polygon points="717.0,680.2 729.0,681.3 729.0,735.4 717.0,734.3" fill="url(#pL)"/>
<polygon points="778.0,685.9 789.0,686.9 789.0,741.0 778.0,740.0" fill="url(#pL)"/>
<polygon points="831.0,690.9 840.0,691.7 840.0,745.7 831.0,744.8" fill="url(#pL)"/>
<polygon points="840.0,691.7 850.0,692.7 850.0,746.6 840.0,745.7" fill="url(#pD)"/>
<polygon points="891.0,696.5 903.0,697.6 903.0,751.5 891.0,750.4" fill="url(#pL)"/>
<polygon points="903.0,697.6 913.0,698.6 913.0,752.4 903.0,751.5" fill="url(#pD)"/>
<polygon points="951.0,702.1 963.0,703.2 963.0,757.0 951.0,755.9" fill="url(#pL)"/>
<polygon points="963.0,703.2 993.0,706.1 993.0,759.8 963.0,757.0" fill="url(#pD)"/>
<polygon points="1000.0,706.7 1012.0,707.8 1012.0,761.5 1000.0,760.4" fill="url(#pL)"/>
<polygon points="1020.0,708.6 1043.0,710.7 1043.0,764.4 1020.0,762.3" fill="url(#pD)"/>
<polygon points="1057.0,712.1 1075.0,713.7 1075.0,767.3 1057.0,765.7" fill="url(#pL)"/>
<polygon points="1075.0,713.7 1087.0,714.9 1087.0,768.4 1075.0,767.3" fill="url(#pL)"/>
<polygon points="351.0,714.6 1087.0,782.1 1087.0,835.7 351.0,769.3" fill="url(#pRf)"/>
<polygon points="351.0,714.6 367.0,716.1 367.0,770.7 351.0,769.3" fill="url(#pDf)"/>
<polygon points="367.0,716.1 393.0,718.4 393.0,763.1 367.0,760.7" fill="url(#pL)"/>
<polygon points="393.0,718.4 414.0,720.4 414.0,735.8 393.0,746.1" fill="url(#pD)"/>
<polygon points="414.0,720.4 426.0,721.5 426.0,776.1 414.0,775.0" fill="url(#pL)"/>
<polygon points="426.0,721.5 430.0,721.8 430.0,776.4 426.0,776.1" fill="#000"/>
<polygon points="430.0,721.8 433.0,722.1 433.0,776.7 430.0,776.4" fill="url(#pD)"/>
<polygon points="444.0,723.1 460.0,724.6 460.0,740.6 444.0,757.1" fill="url(#pD)"/>
<polygon points="469.0,725.4 481.0,726.5 481.0,781.0 469.0,779.9" fill="url(#pL)"/>
<polygon points="481.0,726.5 484.0,726.8 484.0,781.3 481.0,781.0" fill="#000"/>
<polygon points="484.0,726.8 514.0,729.6 514.0,761.0 484.0,776.3" fill="url(#pD)"/>
<polygon points="522.0,730.3 534.5,731.4 534.5,785.9 522.0,784.7" fill="url(#pL)"/>
<polygon points="534.5,731.4 550.0,732.9 550.0,777.7 534.5,781.9" fill="url(#pD)"/>
<polygon points="550.0,732.9 561.0,733.9 561.0,776.3 550.0,775.3" fill="url(#pL)"/>
<polygon points="561.0,733.9 564.0,734.1 564.0,788.5 561.0,788.2" fill="#000"/>
<polygon points="564.0,734.1 578.0,735.4 578.0,763.6 564.0,766.5" fill="url(#pD)"/>
<polygon points="578.0,735.4 590.0,736.5 590.0,790.9 578.0,789.8" fill="url(#pL)"/>
<polygon points="590.0,736.5 594.0,736.9 594.0,791.2 590.0,790.9" fill="#000"/>
<polygon points="594.0,736.9 639.0,741.0 639.0,771.9 594.0,791.2" fill="url(#pD)"/>
<polygon points="639.0,741.0 654.0,742.4 654.0,796.6 639.0,795.3" fill="url(#pL)"/>
<polygon points="654.0,742.4 670.0,743.9 670.0,798.1 654.0,796.6" fill="url(#pDf2)"/>
<polygon points="670.0,743.9 702.0,746.8 702.0,791.1 670.0,788.2" fill="url(#pL)"/>
<polygon points="702.0,746.8 705.0,747.1 705.0,801.2 702.0,801.0" fill="#000"/>
<polygon points="717.0,748.2 729.0,749.3 729.0,803.4 717.0,802.3" fill="url(#pL)"/>
<polygon points="778.0,753.8 789.0,754.8 789.0,808.8 778.0,807.8" fill="url(#pL)"/>
<polygon points="831.0,758.7 840.0,759.5 840.0,813.4 831.0,812.6" fill="url(#pL)"/>
<polygon points="840.0,759.5 850.0,760.4 850.0,814.3 840.0,813.4" fill="url(#pD)"/>
<polygon points="891.0,764.2 903.0,765.3 903.0,819.1 891.0,818.0" fill="url(#pL)"/>
<polygon points="903.0,765.3 913.0,766.2 913.0,820.0 903.0,819.1" fill="url(#pD)"/>
<polygon points="951.0,769.7 963.0,770.8 963.0,824.5 951.0,823.4" fill="url(#pL)"/>
<polygon points="963.0,770.8 993.0,773.5 993.0,827.2 963.0,824.5" fill="url(#pD)"/>
<polygon points="1000.0,774.2 1012.0,775.3 1012.0,829.0 1000.0,827.9" fill="url(#pL)"/>
<polygon points="1020.0,776.0 1043.0,778.1 1043.0,831.7 1020.0,829.7" fill="url(#pD)"/>
<polygon points="1057.0,779.4 1075.0,781.0 1075.0,834.6 1057.0,833.0" fill="url(#pL)"/>
<polygon points="1075.0,781.0 1087.0,782.1 1087.0,835.7 1075.0,834.6" fill="url(#pL)"/>
<polygon points="351.0,783.3 1087.0,849.4 1087.0,903.0 351.0,838.0" fill="url(#pG)"/>
<polygon points="351.0,783.3 367.0,784.7 367.0,839.4 351.0,838.0" fill="url(#pDf)"/>
<polygon points="367.0,784.7 393.0,787.1 393.0,831.7 367.0,829.4" fill="url(#pL)"/>
<polygon points="393.0,787.1 414.0,789.0 414.0,804.4 393.0,814.7" fill="url(#pD)"/>
<polygon points="414.0,789.0 426.0,790.0 426.0,844.6 414.0,843.6" fill="url(#pL)"/>
<polygon points="426.0,790.0 430.0,790.4 430.0,845.0 426.0,844.6" fill="#000"/>
<polygon points="430.0,790.4 433.0,790.7 433.0,845.2 430.0,845.0" fill="url(#pD)"/>
<polygon points="444.0,791.6 460.0,793.1 460.0,809.1 444.0,825.6" fill="url(#pD)"/>
<polygon points="469.0,793.9 481.0,795.0 481.0,849.5 469.0,848.4" fill="url(#pL)"/>
<polygon points="481.0,795.0 484.0,795.2 484.0,849.7 481.0,849.5" fill="#000"/>
<polygon points="484.0,795.2 514.0,797.9 514.0,829.4 484.0,844.7" fill="url(#pD)"/>
<polygon points="522.0,798.7 534.5,799.8 534.5,854.2 522.0,853.1" fill="url(#pL)"/>
<polygon points="534.5,799.8 550.0,801.2 550.0,846.0 534.5,850.2" fill="url(#pD)"/>
<polygon points="550.0,801.2 561.0,802.2 561.0,844.6 550.0,843.6" fill="url(#pL)"/>
<polygon points="561.0,802.2 564.0,802.4 564.0,856.8 561.0,856.5" fill="#000"/>
<polygon points="564.0,802.4 578.0,803.7 578.0,831.8 564.0,834.8" fill="url(#pD)"/>
<polygon points="578.0,803.7 590.0,804.8 590.0,859.1 578.0,858.0" fill="url(#pL)"/>
<polygon points="590.0,804.8 594.0,805.1 594.0,859.5 590.0,859.1" fill="#000"/>
<polygon points="594.0,805.1 639.0,809.2 639.0,840.0 594.0,859.5" fill="url(#pD)"/>
<polygon points="639.0,809.2 654.0,810.5 654.0,864.8 639.0,863.4" fill="url(#pL)"/>
<polygon points="654.0,810.5 670.0,812.0 670.0,866.2 654.0,864.8" fill="url(#pDf2)"/>
<polygon points="670.0,812.0 702.0,814.8 702.0,859.1 670.0,856.3" fill="url(#pL)"/>
<polygon points="702.0,814.8 705.0,815.1 705.0,869.3 702.0,869.0" fill="#000"/>
<polygon points="717.0,816.2 729.0,817.3 729.0,871.4 717.0,870.3" fill="url(#pL)"/>
<polygon points="778.0,821.7 789.0,822.7 789.0,876.7 778.0,875.7" fill="url(#pL)"/>
<polygon points="831.0,826.4 840.0,827.2 840.0,881.2 831.0,880.4" fill="url(#pL)"/>
<polygon points="840.0,827.2 850.0,828.1 850.0,882.1 840.0,881.2" fill="url(#pD)"/>
<polygon points="891.0,831.8 903.0,832.9 903.0,886.7 891.0,885.7" fill="url(#pL)"/>
<polygon points="903.0,832.9 913.0,833.8 913.0,887.6 903.0,886.7" fill="url(#pD)"/>
<polygon points="951.0,837.2 963.0,838.3 963.0,892.0 951.0,891.0" fill="url(#pL)"/>
<polygon points="963.0,838.3 993.0,841.0 993.0,894.7 963.0,892.0" fill="url(#pD)"/>
<polygon points="1000.0,841.6 1012.0,842.7 1012.0,896.4 1000.0,895.3" fill="url(#pL)"/>
<polygon points="1020.0,843.4 1043.0,845.5 1043.0,899.1 1020.0,897.1" fill="url(#pD)"/>
<polygon points="1057.0,846.7 1075.0,848.4 1075.0,901.9 1057.0,900.4" fill="url(#pL)"/>
<polygon points="1075.0,848.4 1087.0,849.4 1087.0,903.0 1075.0,901.9" fill="url(#pL)"/>
<path d="M350.5 357V835" stroke="#000" stroke-width="1.5"/>
<polygon points="351.0,823.8 1091.0,896.7 1091.0,904.7 351.0,831.8" fill="url(#pG)"/>
<polygon points="342.0,824.0 351.0,823.0 351.0,832.0 342.0,831.0" fill="#f0dcf8"/>
<polygon points="345.0,927.2 1091.0,1000.7 1091.0,1043.7 345.0,970.2" fill="url(#pF)"/>
<polygon points="343.0,843.0 1091.0,916.7 1091.0,985.7 343.0,912.0" fill="url(#pG)"/>
<polygon points="1091.0,902.7 1238.0,823.0 1238.0,967.0 1091.0,1052.0" fill="url(#pOs2)"/>
<polygon points="1091.0,902.7 1125.0,884.0 1125.0,1032.3 1091.0,1052.0" fill="url(#pOs)"/>
<polygon points="1133.0,976.6 1172.0,955.1 1172.0,1005.2 1133.0,1027.7" fill="url(#pF)"/>
<polygon points="1125.0,895.0 1133.0,890.6 1133.0,1027.7 1125.0,1032.3" fill="url(#pP)"/>
<polygon points="1179.0,865.3 1187.0,860.9 1187.0,996.5 1179.0,1001.1" fill="url(#pP)"/>
<polygon points="1231.0,836.7 1238.0,832.8 1238.0,967.0 1231.0,971.1" fill="url(#pP)"/>
<polygon points="1171.0,955.7 1186.0,947.4 1186.0,1003.1 1171.0,1011.8" fill="url(#pP)"/>
<polygon points="1091.0,901.7 1238.0,823.0 1238.0,837.0 1091.0,916.7" fill="url(#pBs)"/>
<polygon points="1091.0,983.7 1238.0,892.0 1238.0,906.0 1091.0,999.7" fill="url(#pBs)"/>
<polygon points="1091.0,903.7 1238.0,823.0 1235.0,821.0 1089.0,901.2" fill="#f0dcf8"/>
<polygon points="343.0,843.0 1091.0,916.7 1091.0,924.7 343.0,851.0" fill="url(#pO)"/>
<polygon points="356.0,852.3 398.0,856.4 398.0,911.4 356.0,907.3" fill="url(#pO)"/>
<polygon points="398.0,856.4 411.0,857.7 411.0,903.7 398.0,911.4" fill="url(#pOs)"/>
<polygon points="414.0,858.0 426.0,859.2 426.0,920.2 414.0,919.0" fill="url(#pO)"/>
<polygon points="460.0,862.5 467.0,863.2 467.0,924.2 460.0,923.5" fill="url(#pO)"/>
<polygon points="480.0,864.5 482.0,864.7 482.0,925.7 480.0,925.5" fill="#000"/>
<polygon points="482.0,864.7 508.5,867.3 508.5,908.4 482.0,921.7" fill="url(#pOs)"/>
<polygon points="508.5,869.3 516.5,870.1 516.5,901.1 508.5,900.3" fill="url(#pPs)"/>
<polygon points="533.0,869.7 545.0,870.9 545.0,931.9 533.0,930.7" fill="url(#pO)"/>
<polygon points="545.0,870.9 547.0,871.1 547.0,932.1 545.0,931.9" fill="#000"/>
<polygon points="599.0,876.2 601.0,876.4 601.0,937.4 599.0,937.2" fill="#000"/>
<polygon points="601.0,876.4 628.8,879.1 628.8,919.5 601.0,933.4" fill="url(#pOs)"/>
<polygon points="628.8,881.1 636.8,881.9 636.8,912.9 628.8,912.1" fill="url(#pPs)"/>
<polygon points="654.5,881.7 666.5,882.9 666.5,943.9 654.5,942.7" fill="url(#pO)"/>
<polygon points="666.5,882.9 668.5,883.1 668.5,944.1 666.5,943.9" fill="#000"/>
<polygon points="723.0,888.4 725.0,888.6 725.0,949.6 723.0,949.4" fill="#000"/>
<polygon points="725.0,888.6 751.5,891.2 751.5,932.3 725.0,945.6" fill="url(#pOs)"/>
<polygon points="751.5,893.2 759.5,894.0 759.5,925.0 751.5,924.2" fill="url(#pPs)"/>
<polygon points="776.0,893.7 788.0,894.8 788.0,955.8 776.0,954.7" fill="url(#pO)"/>
<polygon points="788.0,894.8 790.0,895.0 790.0,956.0 788.0,955.8" fill="#000"/>
<polygon points="844.0,900.3 883.0,904.2 883.0,963.2 844.0,959.3" fill="url(#pO)"/>
<polygon points="891.0,905.0 903.0,906.2 903.0,967.2 891.0,966.0" fill="url(#pO)"/>
<polygon points="950.0,910.8 957.0,911.5 957.0,972.5 950.0,971.8" fill="url(#pO)"/>
<polygon points="970.0,912.8 972.0,913.0 972.0,974.0 970.0,973.8" fill="#000"/>
<polygon points="972.0,913.0 999.2,915.6 999.2,956.3 972.0,970.0" fill="url(#pOs)"/>
<polygon points="999.2,917.6 1007.2,918.4 1007.2,949.4 999.2,948.6" fill="url(#pPs)"/>
<polygon points="1024.5,918.1 1036.5,919.3 1036.5,980.3 1024.5,979.1" fill="url(#pO)"/>
<polygon points="1072.0,922.8 1079.0,923.5 1079.0,984.5 1072.0,983.8" fill="url(#pO)"/>
<polygon points="1036.5,919.3 1038.5,919.5 1038.5,980.5 1036.5,980.3" fill="#000"/>
<polygon points="343.0,843.0 356.0,844.3 356.0,913.3 343.0,912.0" fill="url(#pP)"/>
<polygon points="467.0,855.2 480.0,856.5 480.0,925.5 467.0,924.2" fill="url(#pP)"/>
<polygon points="586.0,866.9 599.0,868.2 599.0,937.2 586.0,935.9" fill="url(#pP)"/>
<polygon points="710.0,879.1 723.0,880.4 723.0,949.4 710.0,948.1" fill="url(#pP)"/>
<polygon points="829.0,890.9 842.0,892.2 842.0,961.2 829.0,959.9" fill="url(#pP)"/>
<polygon points="957.0,903.5 970.0,904.8 970.0,973.8 957.0,972.5" fill="url(#pP)"/>
<polygon points="1079.0,915.5 1092.0,916.8 1092.0,985.8 1079.0,984.5" fill="url(#pP)"/>
<polygon points="359.0,927.6 389.0,930.5 389.0,952.5 359.0,969.6" fill="url(#pOs)"/>
<polygon points="389.0,930.5 396.0,931.2 396.0,955.2 389.0,954.5" fill="url(#pPs)"/>
<polygon points="480.0,939.5 586.0,949.9 586.0,993.2 480.0,981.3" fill="url(#pO)"/>
<polygon points="602.0,951.5 632.0,954.5 632.0,976.5 602.0,993.5" fill="url(#pOs)"/>
<polygon points="632.0,954.5 639.0,955.2 639.0,979.2 632.0,978.5" fill="url(#pPs)"/>
<polygon points="723.0,963.4 829.0,973.9 829.0,1020.4 723.0,1008.6" fill="url(#pO)"/>
<polygon points="845.0,975.4 875.0,978.4 875.0,1000.4 845.0,1017.4" fill="url(#pOs)"/>
<polygon points="875.0,978.4 882.0,979.1 882.0,1003.1 875.0,1002.4" fill="url(#pPs)"/>
<polygon points="970.0,987.8 1079.0,998.5 1079.0,1048.4 970.0,1036.2" fill="url(#pO)"/>
<polygon points="343.0,926.0 356.0,927.3 356.0,968.5 343.0,967.0" fill="url(#pP)"/>
<polygon points="467.0,938.2 480.0,939.5 480.0,982.3 467.0,980.9" fill="url(#pP)"/>
<polygon points="586.0,949.9 599.0,951.2 599.0,995.7 586.0,994.2" fill="url(#pP)"/>
<polygon points="710.0,962.1 723.0,963.4 723.0,1009.6 710.0,1008.1" fill="url(#pP)"/>
<polygon points="829.0,973.9 842.0,975.2 842.0,1022.9 829.0,1021.4" fill="url(#pP)"/>
<polygon points="957.0,986.5 970.0,987.8 970.0,1037.2 957.0,1035.8" fill="url(#pP)"/>
<polygon points="1079.0,998.5 1092.0,999.8 1092.0,1050.9 1079.0,1049.4" fill="url(#pP)"/>
<polygon points="1091.0,916.7 1097.0,913.7 1097.0,1048.5 1091.0,1050.8" fill="url(#pPs)"/>
<polygon points="343.0,831.0 1091.0,904.7 1091.0,917.2 343.0,843.5" fill="url(#pB)"/>
<polygon points="345.0,910.2 1091.0,983.7 1091.0,999.7 345.0,926.2" fill="url(#pB)"/>
<polygon points="343.0,831.0 1091.0,904.7 1089.0,902.2 342.0,828.5" fill="#f0dcf8"/>
<path d="M343 831L1091 904.7" stroke="#000" stroke-width="1"/>
<polygon points="397.0,931.3 412.0,932.8 399.0,940.5" fill="#fff"/>
<polygon points="345.0,968.0 1083.0,1041.7 1083.0,1066.5 345.0,996.0" fill="url(#pFd)"/>
<polygon points="345.0,968.0 1083.0,1041.7 1088.0,1039.0 350.0,964.0" fill="url(#pF)"/>
<polygon points="480.0,979.5 586.0,990.1 586.0,993.2 480.0,981.3" fill="url(#pO)"/>
<polygon points="723.0,1003.8 829.0,1014.4 829.0,1020.4 723.0,1008.6" fill="url(#pO)"/>
<polygon points="970.0,1028.5 1079.0,1039.4 1079.0,1048.4 970.0,1036.2" fill="url(#pO)"/>
<polygon points="343.0,965.8 356.0,967.1 356.0,968.5 343.0,967.0" fill="url(#pP)"/>
<polygon points="467.0,978.2 480.0,979.5 480.0,982.3 467.0,980.9" fill="url(#pP)"/>
<polygon points="586.0,990.1 599.0,991.4 599.0,995.7 586.0,994.2" fill="url(#pP)"/>
<polygon points="710.0,1002.5 723.0,1003.8 723.0,1009.6 710.0,1008.1" fill="url(#pP)"/>
<polygon points="829.0,1014.4 842.0,1015.7 842.0,1022.9 829.0,1021.4" fill="url(#pP)"/>
<polygon points="957.0,1027.2 970.0,1028.5 970.0,1037.2 957.0,1035.8" fill="url(#pP)"/>
<polygon points="1079.0,1039.4 1092.0,1040.7 1092.0,1050.9 1079.0,1049.4" fill="url(#pP)"/>
<polygon points="1091.0,1040.6 1097.0,1037.6 1097.0,1048.5 1091.0,1050.8" fill="url(#pPs)"/>
<path d="M343 984L1083 1057" stroke="#1e2850" stroke-width="4" fill="none"/>
<polygon points="1083.0,1050.0 1240.0,966.0 1240.0,976.0 1083.0,1066.5" fill="url(#pFs)"/>
<path d="M1086 1056L1240 969" stroke="#1e2850" stroke-width="5" fill="none"/>
</svg>
<svg class="a" style="left:0;top:0" width="1865" height="955" viewBox="28 180 1865 955" font-family="Liberation Sans,sans-serif">
<text x="295.500" y="279.5" font-size="16.500" fill="#10107a" text-anchor="middle">30.3</text>
<path d="M281 285.5H313M303 294.5H320M311.500 285.5V294M306 287L311.500 294L317 287" fill="none" stroke="#10107a" stroke-width="1"/>
<text x="295.500" y="347.5" font-size="16.500" fill="#10107a" text-anchor="middle">27</text>
<path d="M281 353.5H313M303 362.5H320M311.500 353.5V362M306 355L311.500 362L317 355" fill="none" stroke="#10107a" stroke-width="1"/>
<text x="295.500" y="415.5" font-size="16.500" fill="#10107a" text-anchor="middle">23.7</text>
<path d="M281 421.5H313M303 430.5H320M311.500 421.5V430M306 423L311.500 430L317 423" fill="none" stroke="#10107a" stroke-width="1"/>
<text x="295.500" y="483.5" font-size="16.500" fill="#10107a" text-anchor="middle">20.4</text>
<path d="M281 489.5H313M303 498.5H320M311.500 489.5V498M306 491L311.500 498L317 491" fill="none" stroke="#10107a" stroke-width="1"/>
<text x="295.500" y="551.5" font-size="16.500" fill="#10107a" text-anchor="middle">17.1</text>
<path d="M281 557.5H313M303 566.5H320M311.500 557.5V566M306 559L311.500 566L317 559" fill="none" stroke="#10107a" stroke-width="1"/>
<text x="295.500" y="619.5" font-size="16.500" fill="#10107a" text-anchor="middle">13.8</text>
<path d="M281 625.5H313M303 634.5H320M311.500 625.5V634M306 627L311.500 634L317 627" fill="none" stroke="#10107a" stroke-width="1"/>
<text x="295.500" y="687.5" font-size="16.500" fill="#10107a" text-anchor="middle">10.5</text>
<path d="M281 693.5H313M303 702.5H320M311.500 693.5V702M306 695L311.500 702L317 695" fill="none" stroke="#10107a" stroke-width="1"/>
<text x="295.500" y="755.5" font-size="16.500" fill="#10107a" text-anchor="middle">7.2</text>
<path d="M281 761.5H313M303 770.5H320M311.500 761.5V770M306 763L311.500 770L317 763" fill="none" stroke="#10107a" stroke-width="1"/>
<text x="295.500" y="823.5" font-size="16.500" fill="#10107a" text-anchor="middle">3.9</text>
<path d="M281 829.5H313M303 838.5H320M311.500 829.5V838M306 831L311.500 838L317 831" fill="none" stroke="#10107a" stroke-width="1"/>
<text x="295.500" y="903.5" font-size="16.500" fill="#10107a" text-anchor="middle">0</text>
<path d="M281 909.5H313M303 918.5H320M311.500 909.5V918M306 911L311.500 918L317 911" fill="none" stroke="#10107a" stroke-width="1"/>
<text x="295.500" y="965.5" font-size="16.500" fill="#10107a" text-anchor="middle">-3</text>
<path d="M281 971.5H313M303 980.5H320M311.500 971.5V980M306 973L311.500 980L317 973" fill="none" stroke="#10107a" stroke-width="1"/>
<text x="61.500" y="1079" font-size="16" font-weight="bold" fill="#f01010" textLength="10" lengthAdjust="spacingAndGlyphs">Z</text>
<text x="75" y="1096" font-size="16" font-weight="bold" fill="#1010f0" textLength="10.500" lengthAdjust="spacingAndGlyphs">Y</text>
<text x="85.500" y="1106" font-size="16" font-weight="bold" fill="#108010" textLength="10" lengthAdjust="spacingAndGlyphs">X</text>
<path d="M67.500 1104V1086" stroke="#f01010" stroke-width="1.800"/><path d="M64 1089l3.500-5 3.500 5" fill="none" stroke="#f01010" stroke-width="1.600"/>
<path d="M67.500 1105H85" stroke="#108010" stroke-width="1.800"/><path d="M81 1101.500l5 3.500-5 3.500" fill="none" stroke="#108010" stroke-width="1.600"/>
<path d="M69 1100h6l-2 3h-4z" fill="#1010f0"/>
</svg>
</div>
<div id="dlg" class="a"><div class="tb"><span>Сейсмическое воздействие (трехкомпонентный ответ-спектр)</span><svg class="a" style="left:456px;top:9px" width="13" height="13" viewBox="0 0 13 13" stroke="#111" stroke-width="1.1" fill="none"><path d="M1.5 1.500l10 10M11.5 1.500l-10 10"/></svg></div>
<span class="t" style="left:12px;top:42px">Поправочный коэф. для сейсмических сил</span>
<div class="ed" style="left:279px;top:38px;width:37px;padding-top:3px">1.00</div>
<div class="gb" style="left:9px;top:72px;width:198px;height:58px"><i style="left:6px">Абсциссы</i></div>
<div class="gb" style="left:272px;top:72px;width:198px;height:58px"><i style="left:6px">Ординаты</i></div>
<div class="cb" style="left:20px;top:85px"></div>
<span class="t" style="left:36px;top:86px">Логарифмическая шкала</span>
<div class="cmb" style="left:20px;top:105px;width:157px">Частота (Гц)</div>
<div class="cb" style="left:279px;top:85px"></div>
<span class="t" style="left:295px;top:86px">Логарифмическая шкала</span>
<div class="cmb" style="left:279px;top:105px;width:157px">Ускорение (м/с2)</div>
<div class="gb" style="left:6px;top:143px;width:465px;height:41px"><i style="left:6px">Масштабные множители к ординатам</i></div>
<span class="t" style="left:15px;top:158px">для радиальной</span>
<div class="ed" style="left:104px;top:154px;width:37px;padding-top:3px">1.000</div>
<span class="t" style="left:157px;top:158px">для тангенциальной</span>
<div class="ed" style="left:266px;top:154px;width:37px;padding-top:3px">1.000</div>
<span class="t" style="left:321px;top:158px">для вертикальной</span>
<div class="ed" style="left:420px;top:154px;width:37px;padding-top:3px">0.750</div>
<div class="gb" style="left:6px;top:198px;width:465px;height:44px"><i style="left:6px">Направляющие косинусы радиальной компоненты</i></div>
<span class="t" style="left:37px;top:218px">CX</span>
<div class="ed" style="left:65px;top:210px;width:43px;padding-top:2px">0.0000</div>
<span class="t" style="left:186px;top:218px">CY</span>
<div class="ed" style="left:212px;top:210px;width:43px;padding-top:2px">1.0000</div>
<span class="t" style="left:317px;top:218px">CX*CX + CY*CY = 1</span>
<div class="gb" style="left:6px;top:256px;width:465px;height:67px"><i style="left:6px">Направляющие косинусы равнодействующей сейсм. воздейств. в ГСК</i></div>
<div class="cb" style="left:27px;top:269px"></div>
<span class="t" style="left:43px;top:270px">Учет направляющих косинусов</span>
<span class="t" style="left:20px;top:299px">CX(ock)</span>
<div class="ed" style="left:65px;top:292px;width:43px;padding-top:2px">0.0000</div>
<span class="t" style="left:119px;top:299px">CY(ock)</span>
<div class="ed" style="left:162px;top:292px;width:43px;padding-top:2px">0.0000</div>
<span class="t" style="left:217px;top:299px">CZ(ock)</span>
<div class="ed" style="left:260px;top:292px;width:43px;padding-top:2px">0.0000</div>
<span class="t" style="left:310px;top:299px">CX*CX + CY*CY + CZ*CZ = 1</span>
<span class="t" style="left:12px;top:340px">Отображаемая компонента:</span>
<div class="cmb" style="left:180px;top:336px;width:73px">РК</div>
<div class="btn" style="left:267px;top:335px;width:74px;height:22px;border:2px solid #0078d7;text-align:center;padding-top:3px">График</div>
<div class="gb" style="left:6px;top:365px;width:465px;height:238px"><i style="left:6px">Значения абсцисс и ординат</i></div>
<div class="rad" style="left:15px;top:380px"></div>
<span class="t" style="left:31px;top:381px">Чтение из файла</span>
<div class="ed" style="left:180px;top:376px;width:106px;background:#f4f4f4;border-color:#d4d4d4"></div>
<div class="rad on" style="left:15px;top:403px"></div>
<span class="t" style="left:31px;top:403px">Ввод и редактирование</span>
<span class="t" style="left:17px;top:428px">Радиальная компонента</span>
<div class="ta" style="left:180px;top:408px;width:271px;height:61px;padding:2px 0 0 4px;tab-size:48px;-moz-tab-size:48px">0	2 0.01	2.3 0.02	2.6 0.03	2.9 0.04	3.2
  0.05	3.5 0.06	3.8 0.07	4.1 0.08	4.4 0.09	4.7
  0.1	5 0.11	5 0.12	5 0.13	5 0.14	5
  0.15	5 0.16	5 0.17	5 0.18	5 0.19	5
  0.2	5 0.21	5 0.22	5 0.23	5 0.24	5</div>
<span class="t" style="left:17px;top:488px">Тангенциальная компонента</span>
<div class="ta" style="left:180px;top:473px;width:271px;height:61px;padding:2px 0 0 4px;tab-size:48px;-moz-tab-size:48px">0	2 0.01	2.3 0.02	2.6 0.03	2.9 0.04	3.2
  0.05	3.5 0.06	3.8 0.07	4.1 0.08	4.4 0.09	4.7
  0.1	5 0.11	5 0.12	5 0.13	5 0.14	5
  0.15	5 0.16	5 0.17	5 0.18	5 0.19	5
  0.2	5 0.21	5 0.22	5 0.23	5 0.24	5</div>
<span class="t" style="left:17px;top:558px">Вертикальная компонента</span>
<div class="ta" style="left:180px;top:538px;width:271px;height:61px;padding:2px 0 0 4px;tab-size:48px;-moz-tab-size:48px">0	2 0.01	2.3 0.02	2.6 0.03	2.9 0.04	3.2
  0.05	3.5 0.06	3.8 0.07	4.1 0.08	4.4 0.09	4.7
  0.1	5 0.11	5 0.12	5 0.13	5 0.14	5
  0.15	5 0.16	5 0.17	5 0.18	5 0.19	5
  0.2	5 0.21	5 0.22	5 0.23	5 0.24	5</div>
<div class="btn" style="left:163px;top:610px;width:37px;height:22px"><svg width="35" height="20" viewBox="0 0 35 20"><path d="M11 10l3 1 3 4 8-11-7 7-2 3z" fill="#5a8a2a" stroke="#47701e" stroke-width="1"/></svg></div>
<div class="btn" style="left:225px;top:610px;width:32px;height:22px"><svg width="30" height="20" viewBox="0 0 30 20"><path d="M9 4l13 13M21 4l-12 13" stroke="#c01818" stroke-width="3" fill="none"/></svg></div>
<div class="btn" style="left:282px;top:610px;width:32px;height:22px;text-align:center;font-family:'Liberation Serif',serif;font-weight:bold;font-size:15px;color:#5a7a2a;line-height:18px">?</div>
</div>
<div id="gr" class="a">
<svg class="a" style="left:0;top:0" width="680" height="402" viewBox="1208 223 680 402" font-family="Liberation Sans,sans-serif" font-size="11">
<rect x="1215.500" y="231.500" width="14" height="12" fill="#f4f4f4" stroke="#b0b0b0"/><rect x="1217" y="233" width="7" height="9" fill="#3a8a7a"/><rect x="1224" y="233" width="4" height="9" fill="#d8dce4"/>
<text x="1236" y="242" font-size="12" fill="#8c8c8c">График</text>
<path d="M1867.500 232.500l10 10M1877.500 232.500l-10 10" stroke="#666" stroke-width="1" fill="none"/>
<path d="M1279.5 252.5V557.2M1301.5 252.5V557.2M1323.5 252.5V557.2M1345.5 252.5V557.2M1388.5 252.5V557.2M1410.5 252.5V557.2M1432.5 252.5V557.2M1454.5 252.5V557.2M1498.5 252.5V557.2M1520.5 252.5V557.2M1542.5 252.5V557.2M1564.5 252.5V557.2M1607.5 252.5V557.2M1629.5 252.5V557.2M1651.5 252.5V557.2M1673.5 252.5V557.2M1717.5 252.5V557.2M1739.5 252.5V557.2M1760.5 252.5V557.2M1782.5 252.5V557.2M1826.5 252.5V557.2M1848.5 252.5V557.2M1870.5 252.5V557.2M1257.2 547.5H1888M1257.2 537.5H1888M1257.2 527.5H1888M1257.2 516.5H1888M1257.2 496.5H1888M1257.2 486.5H1888M1257.2 475.5H1888M1257.2 465.5H1888M1257.2 445.5H1888M1257.2 435.5H1888M1257.2 424.5H1888M1257.2 414.5H1888M1257.2 394.5H1888M1257.2 383.5H1888M1257.2 373.5H1888M1257.2 363.5H1888M1257.2 343.5H1888M1257.2 332.5H1888M1257.2 322.5H1888M1257.2 312.5H1888M1257.2 291.5H1888M1257.2 281.5H1888M1257.2 271.5H1888M1257.2 261.5H1888" stroke="#a8a8a8" stroke-width="1" stroke-dasharray="3 3" fill="none"/>
<path d="M1366.6 252.5V557.2M1476.0 252.5V557.2M1585.4 252.5V557.2M1694.8 252.5V557.2M1804.2 252.5V557.2M1257.2 506.1H1888M1257.2 455.0H1888M1257.2 403.9H1888M1257.2 352.8H1888M1257.2 301.7H1888" stroke="#d2d2d2" stroke-width="1.6" fill="none"/>
<path d="M1257.2 252.5V557.2" stroke="#e02020" stroke-width="1.2"/><path d="M1257.2 557.2H1888" stroke="#20e020" stroke-width="1.6"/>
<polyline points="1257.2,455.0 1268.1,301.7 1301.0,301.7 1301.0,301.7 1306.4,316.9 1311.9,329.7 1317.4,340.7 1322.8,350.3 1328.3,358.7 1333.8,366.2 1339.2,372.9 1344.7,379.0 1350.2,384.6 1355.7,389.6 1361.1,394.3 1366.6,398.5 1372.1,402.5 1377.5,406.2 1383.0,409.7 1388.5,412.9 1394.0,415.9 1399.4,418.8 1404.9,421.5 1410.4,424.0 1415.8,426.4 1421.3,428.7 1426.8,430.9 1432.2,432.9 1437.7,434.9 1443.2,436.8 1448.7,438.6 1454.1,440.3 1459.6,442.0 1465.1,443.6 1470.5,445.1 1476.0,446.6 1481.5,448.0 1486.9,449.3 1492.4,450.6 1497.9,451.9 1503.4,453.1 1508.8,454.3 1514.3,455.5 1519.8,456.6 1525.2,457.6 1530.7,458.7 1536.2,459.7 1541.6,460.7 1547.1,461.6 1552.6,462.5 1558.0,463.4 1563.5,464.3 1569.0,465.2 1574.5,466.0 1579.9,466.8 1585.4,467.6 1590.9,468.4 1596.3,469.1 1601.8,469.8 1607.3,470.5 1612.7,471.2 1618.2,471.9 1623.7,472.6 1629.2,473.2 1634.6,473.9 1640.1,474.5 1645.6,475.1 1651.0,475.7 1656.5,476.3 1662.0,476.8 1667.4,477.4 1672.9,478.0 1678.4,478.5 1683.9,479.0 1689.3,479.5 1694.8,480.0 1700.3,480.5 1705.7,481.0 1711.2,481.5 1716.7,482.0 1722.1,482.4 1727.6,482.9 1733.1,483.3 1738.6,483.8 1744.0,484.2 1749.5,484.6 1755.0,485.0 1760.4,485.4 1765.9,485.9 1771.4,486.2 1776.8,486.6 1782.3,487.0 1787.8,487.4 1793.3,487.8 1798.7,488.1 1804.2,488.5" stroke="#0000e0" stroke-width="2" fill="none" stroke-linejoin="round"/>
<text x="1257.2" y="572" text-anchor="middle">0</text>
<text x="1232" y="561.2" text-anchor="middle">0</text>
<text x="1366.6" y="572" text-anchor="middle">1</text>
<text x="1232" y="510.1" text-anchor="middle">1</text>
<text x="1476.0" y="572" text-anchor="middle">2</text>
<text x="1232" y="459.0" text-anchor="middle">2</text>
<text x="1585.4" y="572" text-anchor="middle">3</text>
<text x="1232" y="407.9" text-anchor="middle">3</text>
<text x="1694.8" y="572" text-anchor="middle">4</text>
<text x="1232" y="356.8" text-anchor="middle">4</text>
<text x="1804.2" y="572" text-anchor="middle">5</text>
<text x="1232" y="305.7" text-anchor="middle">5</text>
<text x="1853" y="588">sec</text>
<path d="M1306 591H1345" stroke="#0000e0" stroke-width="2"/><text x="1356" y="595">Graph1</text>
<rect x="1208" y="608" width="680" height="17" fill="#f0f0f0"/><rect x="1224" y="608" width="17" height="17" fill="#cdcdcd"/>
<path d="M1217.500 612.500l-4 4 4 4M1876.500 612.500l4 4-4 4" stroke="#444" stroke-width="1.6" fill="none"/>
</svg>
<div class="gbtn" style="left:645px;top:41px;width:28px;height:28px"><svg width="26" height="26" viewBox="0 0 26 26"><rect x="5" y="5" width="16" height="16" fill="#fff"/><path d="M7 10l3-2 9 1.500 1 8-3 1.500-9-1.500z" fill="#dcdcdc" stroke="#8a8a8a" stroke-width=".8"/><path d="M10 8l.5 9.500" stroke="#a0a0a0" fill="none"/><circle cx="13" cy="14" r="2.400" fill="#1a1a1a" stroke="#8a8a8a" stroke-width=".7"/><circle cx="12.300" cy="13.300" r=".7" fill="#fff"/></svg></div>
<div class="gbtn" style="left:645px;top:81px;width:28px;height:28px"><svg width="26" height="26" viewBox="0 0 26 26"><rect x="5" y="5" width="16" height="16" fill="#c8c8c8"/><rect x="15" y="5" width="6" height="6" fill="#dedede"/><rect x="5.500" y="5.500" width="9" height="9" fill="#1a8a28" stroke="#0a5a18"/><path d="M7 7l6 6M13 7l-6 6" stroke="#b8f0b8" stroke-width="1.300"/><path d="M14 12h4v2h-4zM14.500 14v7M20.500 14v7M14.500 17.500h6" stroke="#8a7a10" stroke-width="1.400" fill="#8a7a10"/></svg></div>
<div class="gbtn" style="left:645px;top:121px;width:28px;height:28px"><svg width="26" height="26" viewBox="0 0 26 26"><rect x="5" y="5" width="16" height="16" fill="#c8c8c8"/><rect x="15" y="5" width="6" height="6" fill="#dedede"/><rect x="5.500" y="5.500" width="9" height="9" fill="#28e838" stroke="#10c020"/><path d="M7 7l6 6M13 7l-6 6" stroke="#c8ffc8" stroke-width="1.300"/><path d="M14 12h4v2h-4zM14.500 14v7M20.500 14v7M14.500 17.500h6" stroke="#8a7a10" stroke-width="1.400" fill="#8a7a10"/></svg></div>
<div class="gbtn" style="left:645px;top:161px;width:28px;height:28px"><svg width="26" height="26" viewBox="0 0 26 26"><circle cx="11.500" cy="11.500" r="5" fill="#e8f2f8" stroke="#8a98a8" stroke-width="1.600"/><path d="M8 13.500a4 4 0 0 0 7 0z" fill="#a8c8e0"/><path d="M8.500 11.500h6" stroke="#111" stroke-width="1.600"/><path d="M15.500 15.500l5 5" stroke="#1a1a1a" stroke-width="2.600" stroke-linecap="round"/></svg></div>
<div class="gbtn" style="left:645px;top:201px;width:28px;height:28px"><svg width="26" height="26" viewBox="0 0 26 26"><circle cx="11.500" cy="11.500" r="5" fill="#e8f2f8" stroke="#8a98a8" stroke-width="1.600"/><path d="M8 13.500a4 4 0 0 0 7 0z" fill="#a8c8e0"/><path d="M8.500 11.500h6M11.500 8.500v6" stroke="#111" stroke-width="1.600"/><path d="M15.500 15.500l5 5" stroke="#1a1a1a" stroke-width="2.600" stroke-linecap="round"/></svg></div>
</div>
<svg class="a" style="left:0;top:0" width="1920" height="178" viewBox="0 0 1920 178" font-family="Liberation Sans,sans-serif">
<defs>
<linearGradient id="gPage" x1="0" y1="0" x2="0" y2="1"><stop offset="0" stop-color="#c8cbe8"/><stop offset=".6" stop-color="#f4f4fc"/><stop offset="1" stop-color="#fff"/></linearGradient>
<linearGradient id="gPageG" x1="0" y1="0" x2="0" y2="1"><stop offset="0" stop-color="#b8d4b0"/><stop offset=".7" stop-color="#f0f6ee"/><stop offset="1" stop-color="#fff"/></linearGradient>
<linearGradient id="gCyl" x1="0" y1="0" x2="1" y2="0"><stop offset="0" stop-color="#8a8898"/><stop offset=".35" stop-color="#f4f4f8"/><stop offset="1" stop-color="#6a687c"/></linearGradient>
<linearGradient id="gOr" x1="0" y1="0" x2="0" y2="1"><stop offset="0" stop-color="#fbd9a0"/><stop offset=".5" stop-color="#f7b654"/><stop offset=".55" stop-color="#f3a73a"/><stop offset="1" stop-color="#fbd48a"/></linearGradient>
<radialGradient id="gBall" cx=".4" cy=".4" r=".7"><stop offset="0" stop-color="#e8ec90"/><stop offset="1" stop-color="#a8b860"/></radialGradient>
<linearGradient id="gBox" x1="0" y1="0" x2="0" y2="1"><stop offset="0" stop-color="#e8cfa4"/><stop offset="1" stop-color="#c8a470"/></linearGradient>
<radialGradient id="gApp" cx=".5" cy=".35" r=".75"><stop offset="0" stop-color="#fff"/><stop offset=".55" stop-color="#e4e6ea"/><stop offset="1" stop-color="#9a9ea6"/></radialGradient>
<linearGradient id="gArrow" x1="0" y1="0" x2="0" y2="1"><stop offset="0" stop-color="#3a4a90"/><stop offset="1" stop-color="#5a6ab8"/></linearGradient>
</defs>
<circle cx="30.200" cy="23.200" r="17.500" fill="url(#gApp)" stroke="#7a8088" stroke-width="1"/>
<g fill="none" stroke="#4e98c4" stroke-width="2.200" stroke-linecap="round"><circle cx="18.500" cy="17.500" r="2.600"/><path d="M21 16.500L40.500 11.500M23 19.500L39 15"/><path d="M37 19c0-5 8-5 8 1s-8 7-9 2c0-3 4-4 5-1"/><path d="M23.500 19L27 34.500M27.500 18L29.500 35.500M31.800 17L31.500 35.500M35.800 16L34 33.500M27 11.500l.5 5.500"/></g>
<g fill="none" stroke="#a8d4ec" stroke-width=".7" stroke-linecap="round"><path d="M21 16L40.500 11M23.500 19L27 34.500M31.800 17L31.500 35.500"/><circle cx="18.500" cy="17.500" r="2.600"/></g>
<path d="M71.500 5.500h11l5 5v14h-16z" fill="#f4f4f4" stroke="#a0a0a0"/><path d="M82.500 5.500v5h5" fill="#d8d8d8" stroke="#a0a0a0"/>
<path d="M96 13.5h6l-3 3.500z" fill="#555"/>
<rect x="110.500" y="5.500" width="20" height="15" fill="#f0f0f8" stroke="#9a9ab0"/><rect x="111" y="6" width="19" height="2" fill="#b0a8e0"/><path d="M114 15h5l1.500 1.500h10.500v9h-17z" fill="#f4c860" stroke="#c89020"/><path d="M121 16v-5h-2.500l4-4.500 4 4.500h-2.500v5z" fill="#1a2a78"/>
<rect x="139.500" y="3.500" width="20" height="20" rx="1" fill="#1a1a1a" stroke="#000"/><rect x="143" y="4" width="13" height="9" fill="#e8e8e8"/><path d="M144 6h11M144 8h11M144 10h11" stroke="#b0b0b0" stroke-width=".8"/><rect x="144" y="16" width="11" height="7" fill="#8a8a8a"/><rect x="146" y="17" width="3" height="5" fill="#e8e8e8"/>
<path d="M172 11l8-7v4c8 0 10 7 8 14c-1-6-4-8-8-8v4z" fill="#2a94b0" opacity=".75"/>
<path d="M197 13.5h6l-3 3.500z" fill="#555"/>
<path d="M231 11l-8-7v4c-8 0-10 7-8 14c1-6 4-8 8-8v4z" fill="#2a94b0" opacity=".75"/>
<path d="M238 13.5h6l-3 3.500z" fill="#555"/>
<path d="M254 8l14-4.500 4 3-1 15-13 5-4-4z" fill="#b8ccd8" stroke="#4a5a68" stroke-width="1"/><path d="M254 8l4 3 14-4.500M258 11v15.500M254 15l4 3 13-4.500" fill="none" stroke="#4a5a68" stroke-width="1"/>
<path d="M283 10l9 5v12l-9-6z" fill="#6a5aa8" stroke="#3a3080"/><path d="M292 15l10-5v11l-10 6z" fill="#d0d0e8" stroke="#7a7aa0"/><path d="M286 4l6 11v12l-5-9z" fill="#8a7ac8" stroke="#3a3080"/><path d="M284 17l6 2 1 5z" fill="#e8c020"/><path d="M285 19l5 4-1 3z" fill="#40a840"/>
<path d="M312 9l4-2 14 3 1 13-4 2-14-3z" fill="#e4e4e4" stroke="#8a8a8a"/><path d="M316 7l1 15M331 11l-14 -2" stroke="#a0a0a0" fill="none"/><circle cx="320.500" cy="17" r="3.500" fill="#1a1a1a" stroke="#8a8a8a"/><circle cx="319.500" cy="16" r="1" fill="#fff"/><circle cx="319" cy="11" r=".9" fill="#333"/>
<path d="M343 16l3-1-1-9c1-1.500 2-1.500 3 0l1 7 3 .5 3 1 2 4-3 7h-7z" fill="#e8c488" stroke="#b08840" stroke-width=".8"/><path d="M355 3h8l-5 8h5l-11 15 3-11h-5z" fill="#f8e020" stroke="#c89808" stroke-width=".9"/>
<path d="M369 13.5h6l-3 3.500z" fill="#555"/>
<path d="M382 21l15-3 6 3-16 4z" fill="#b8c888" stroke="#7a8a50" stroke-width=".8"/><path d="M382 21v3l5 4v-3zM387 25v3l16-4v-3z" fill="#98a868" stroke="#7a8a50" stroke-width=".6"/><path d="M382.500 9l4-3.500v15l-4 .5z" fill="#2a3a88"/><path d="M386.500 5.500l3.500 1.500v14l-3.500-.5z" fill="#8a9ad8" stroke="#2a3a88" stroke-width=".6"/><rect x="395.500" y="10.500" width="3.500" height="11" rx="1" fill="#d02050" stroke="#801030" stroke-width=".6"/>
<path d="M424 12.500h6" stroke="#555" stroke-width="1.3"/>
<path d="M424 15.5h6l-3 3.500z" fill="#555"/>
<text x="18" y="78" font-size="19" font-weight="bold" fill="#2a2d4a" textLength="40" lengthAdjust="spacingAndGlyphs">X,Y,Z</text>
<path d="M15 94.500H58M26.500 83V106" stroke="#1f4a66" stroke-width="3.500"/><circle cx="26.500" cy="94.500" r="7" fill="url(#gBall)" stroke="#8a9a50" stroke-width="1"/>
<path d="M81 70L108 97" stroke="#1f4a66" stroke-width="3"/><circle cx="81" cy="70" r="4" fill="url(#gBall)" stroke="#8a9a50"/><circle cx="108" cy="97" r="4" fill="url(#gBall)" stroke="#8a9a50"/>
<path d="M153 60L130 83 153 108 176 83z" fill="#c4dcff" stroke="#1e82ff" stroke-width="1.6"/><path d="M153 60V108M153 60L142 86 153 108M153 60L165 86 153 108M153 60L135 85M153 60L171 85" fill="none" stroke="#1e82ff" stroke-width="1.400"/><path d="M131 84C140 92 166 92 175 84M138 76C146 80 160 80 168 76" fill="none" stroke="#1e82ff" stroke-width="2.600"/>
<path d="M187 64.500H207M187 72.500H207M188 64V82M197 64V82M206 64V82" stroke="#1f4a66" stroke-width="2" fill="none"/>
<path d="M215.5 70.5h6l-3 3.500z" fill="#444"/>
<path d="M231 65v14c0 5 19 5 19 0V65" fill="url(#gCyl)"/><ellipse cx="240.500" cy="65" rx="9.500" ry="3.500" fill="#d8d8e0" stroke="#9a98a8" stroke-width=".6"/>
<path d="M258 70.5h6l-3 3.500z" fill="#444"/>
<path d="M271 79c0-22 24-22 24 0z" fill="#8ab8cc" stroke="#fff" stroke-width="1.500"/><path d="M275 79l8-15 8 15M279 70h9M283 64l-8 8M283 64l8 8M279 70l4 9 5-9" stroke="#e8f4f8" stroke-width=".8" fill="none"/>
<path d="M335 61.500h-14v5" fill="none" stroke="#2a2d5a" stroke-width="1.2"/><path d="M317.500 65.500h7l-3.500 4z" fill="#2a2d5a"/><path d="M316 72h18M314 78h18M319 68l-5 14M327 68l-5 14M335 68l-5 14" stroke="#2a2d5a" stroke-width="1" stroke-dasharray="2 1.500" fill="none"/><path d="M334 69.500l2 2-2 2-2-2zM331 74.500l2 2-2 2-2-2zM320 79.500l2 2-2 2-2-2zM314 79.500l2 2-2 2-2-2z" fill="#fff" stroke="#2a2d5a" stroke-width=".8"/>
<path d="M185.500 109.500V98l11.500-4.500L208.500 98v11.500zM185.500 109.500l3.500-13 4 13 4-16 4 16 4-13 3.500 13" fill="none" stroke="#1f4a66" stroke-width="1.300"/>
<path d="M228.500 103.500h12v11h-12z" fill="#c4cce4" stroke="#1f3a66" stroke-width="1.300"/><path d="M228.500 103.500l4-4h12l-4 4zM240.500 103.500l4-4v10l-4 5z" fill="#e4ecf4" stroke="#9aa8b8" stroke-width=".7"/><path d="M244.500 90v14M238 97.500h13" stroke="#d02828" stroke-width="1.300"/><path d="M244.500 89l-2 3h4zM251.500 97.500l-3-2v4zM238 97.500l3-2v4zM244.500 105l-2-3h4z" fill="#d02828"/>
<path d="M258 100.5h6l-3 3.500z" fill="#444"/>
<rect x="273.500" y="92.500" width="20" height="20" fill="#dce8f0" stroke="#1f4a66" stroke-width="1.500"/><path d="M278.500 92v21M283.500 92v21M288.500 92v21M273 97.500h21M273 102.500h21M273 107.500h21" stroke="#1f4a66" stroke-width="1.300"/><path d="M274 93l19 19M293 93l-19 19M274 103l10 10M284 93l10 10M284 113l10-10M274 103l10-10" stroke="#1f4a66" stroke-width=".6"/>
<path d="M301 100.5h6l-3 3.500z" fill="#444"/>
<path d="M315.500 96V110.500H338.500V96M323 101V110M331 101V110" fill="none" stroke="#1f4a66" stroke-width="1.400"/><path d="M315.500 95C320 104 334 104 338.500 95" fill="none" stroke="#d02828" stroke-width="2.200"/>
<path d="M186 143V123l5-3.500h10v7h8v16M186 123h10v20M196 126.500h13M201 119.500V126M186 130h23M186 137h23M191 119.500V140M203 127v16M186 130l5-3.500M186 137l5-3.500" fill="none" stroke="#1f4a66" stroke-width="1.300"/>
<text x="240.500" y="128" font-family="Liberation Serif,serif" font-weight="bold" font-size="9" fill="#4a4a5a" text-anchor="middle">z=</text><text x="240.500" y="140" font-family="Liberation Serif,serif" font-weight="bold" font-size="12.500" fill="#4a4a5a" text-anchor="middle">f(x,y)</text>
<path d="M258 130.5h6l-3 3.500z" fill="#444"/>
<path d="M277 124.500h18M274 131.500h18M271 138.500h18M279 122l-7 19M287 122l-7 19M295 122l-7 19" stroke="#2a2d5a" stroke-width="1.100" stroke-dasharray="2.500 1.500" fill="none"/>
<path d="M301 130.5h6l-3 3.500z" fill="#444"/>
<path d="M391.5 64.5h14l6 6v28h-20z" fill="url(#gPageG)" stroke="#a02030" stroke-width="1"/><path d="M405.5 64.5v6h6" fill="#e8e8f0" stroke="#a02030" stroke-width="1"/>
<path d="M385.5 67.5h14l6 6v28h-20z" fill="url(#gPageG)" stroke="#a02030" stroke-width="1"/><path d="M399.5 67.5v6h6" fill="#e8e8f0" stroke="#a02030" stroke-width="1"/>
<path d="M378.5 69.5h19l8 8v26h-27z" fill="url(#gPage)" stroke="#2a2a80" stroke-width="1"/><path d="M397.5 69.5v8h8" fill="#e8e8f0" stroke="#2a2a80" stroke-width="1"/>
<path d="M381 75h14M381 79h14M381 83h22M381 87h22M381 91h22M381 95h22M381 99h22" stroke="#8888b8" stroke-width=".9"/>
<path d="M456 89h32v11c0 2-1 3-3 3h-26c-2 0-3-1-3-3z" fill="url(#gBox)" stroke="#a88858" stroke-width=".8"/><path d="M456 82l-5 7h42l-5-7z" fill="#e8d0a8" stroke="#b89868" stroke-width=".8"/><path d="M456 82l-6 4 7-9 30 0 7 9-6-4z" fill="#d8bc90" stroke="#b89868" stroke-width=".7"/>
<circle cx="463.500" cy="69" r="4.500" fill="url(#gBall)" stroke="#6a8a50" stroke-width=".8"/><circle cx="477.500" cy="74" r="4.500" fill="url(#gBall)" stroke="#6a8a50" stroke-width=".8"/><path d="M462 82a4.500 4.500 0 0 1 9 0z" fill="url(#gBall)" stroke="#6a8a50" stroke-width=".8"/>
<path d="M537.5 64.5h19l8 8v26h-27z" fill="url(#gPageG)" stroke="#4a6a40" stroke-width="1"/><path d="M556.5 64.5v8h8" fill="#e8e8f0" stroke="#4a6a40" stroke-width="1"/>
<path d="M524.5 69.5h19l8 8v26h-27z" fill="url(#gPage)" stroke="#2a2a80" stroke-width="1"/><path d="M543.5 69.5v8h8" fill="#e8e8f0" stroke="#2a2a80" stroke-width="1"/>
<path d="M594 67l8-6.500 9 4-7 7zM598 79l8-7 9 4-7 7z" fill="#d8e4f8" stroke="#1f4a66" stroke-width="1.200"/><path d="M594 67l17-2.500" stroke="#1f4a66" stroke-width=".8"/><path d="M609 61c5 1 7 5 6 9" fill="none" stroke="#c82828" stroke-width="1.400"/><path d="M612.500 69.500l4.500-.5-2.500 3.500z" fill="#c82828"/>
<path d="M623 70.5h6l-3 3.500z" fill="#444"/>
<path d="M642 60l9 18M654 60l-9 18" stroke="#a0a0a0" stroke-width="1.400"/><ellipse cx="642.500" cy="80" rx="2.500" ry="4" transform="rotate(25 642.500 80)" fill="none" stroke="#3a9ac8" stroke-width="1.600"/><ellipse cx="654" cy="80" rx="2.500" ry="4" transform="rotate(-25 654 80)" fill="none" stroke="#3a9ac8" stroke-width="1.600"/>
<path d="M673 62.500h18v18M673 62V81M682 62V81M673 71.500H692" fill="none" stroke="#1f4a66" stroke-width="1.500"/><circle cx="673" cy="62.500" r="1.500" fill="#5a9a40"/><circle cx="682" cy="62.500" r="1.500" fill="#5a9a40"/><circle cx="691" cy="62.500" r="1.500" fill="#5a9a40"/><circle cx="691" cy="71.500" r="1.500" fill="#5a9a40"/><circle cx="679" cy="71" r="5.500" fill="#d4e4ec" stroke="#8aa0b0" stroke-width="1.500"/><path d="M683 75.500l6 6" stroke="#5a6a78" stroke-width="2.200"/>
<path d="M594.500 106.500l6-10h8l-6 10zM603 106.500l6-10h7l-6 10z" fill="#d4e0f0" stroke="#1f4a66" stroke-width="1.100"/><path d="M597 111l18-18" stroke="#c82828" stroke-width="1.300"/>
<path d="M623 100.5h6l-3 3.500z" fill="#444"/>
<rect x="641.500" y="90.500" width="17" height="20" fill="#f0f0f0" stroke="#9a9a9a"/><path d="M644 93.500h11v14" fill="none" stroke="#444" stroke-width=".8" stroke-dasharray="2 1.500"/><path d="M648 101l7-7M650.500 93.500h5v5" fill="none" stroke="#2a2a60" stroke-width="1.500"/><rect x="637.500" y="100.500" width="11" height="12" fill="#c8cce8" stroke="#2a2a80" stroke-width="1.200"/>
<rect x="672.500" y="97.500" width="21" height="14" rx="1.500" fill="#d8c490" stroke="#a89050"/><path d="M670.500 91.500h15l4 4v12h-19z" fill="#f4f4f4" stroke="#a8a8a8"/><path d="M673 101v-3h14v3M679 98v-3h8v6M679 96.500h8" fill="none" stroke="#d02828" stroke-width="1.200"/>
<path d="M700 100.5h6l-3 3.500z" fill="#444"/>
<path d="M593 126l10 8-10 9z" fill="#d8dcf0"/><path d="M594 126h9l12 9-4 4zM603 143l12-8v3l-8 5z" fill="#a8c8d8" stroke="#2a4a60" stroke-width=".9"/><path d="M614 121l-12 14" stroke="#b81818" stroke-width="3"/><path d="M602 135l-8 9" stroke="#e8a0a8" stroke-width="3"/>
<text x="637" y="130" font-family="Liberation Serif,serif" font-weight="bold" font-size="9" fill="#3a3a58">№</text><text x="636" y="139" font-family="Liberation Serif,serif" font-weight="bold" font-size="9" fill="#3a3a58">1,2...</text><path d="M657.500 124v16" stroke="#1a1a40" stroke-width="1.100"/><path d="M655 138h5l-2.500 4z" fill="#1a1a40"/>
<text x="733" y="81" font-size="25" fill="#3a3a68" textLength="30" lengthAdjust="spacingAndGlyphs">EF</text>
<path d="M737 90L768 66l6 8-30 26z" fill="#b8ccd8" stroke="#7a8a98" stroke-width=".6"/><path d="M740 88L770 65l2 3-30 24z" fill="#f0f6fa"/><ellipse cx="771" cy="70" rx="3.500" ry="5.500" transform="rotate(-40 771 70)" fill="#c8d8e4"/><circle cx="743.500" cy="95" r="8" fill="#fff" stroke="#c8c8d0" stroke-width="1"/><circle cx="743.500" cy="95" r="4.300" fill="#4a4a70"/><path d="M758 95.500h20M768 86v20" stroke="#3a44a0" stroke-width="6"/>
<path d="M795 77.500h20" stroke="#1f4a66" stroke-width="1.800"/><circle cx="797.500" cy="74" r="1.800" fill="#6aa040"/><circle cx="805" cy="74" r="1.800" fill="#6aa040"/><circle cx="812.500" cy="74" r="1.800" fill="#6aa040"/><path d="M797 71l5-5M805 71l5-5M812 71l5-5" stroke="#c82828" stroke-width="1.200"/><path d="M800 65.500h3v3zM808 65.500h3v3zM815 65.500h3.500v3z" fill="#c82828"/>
<path d="M825.5 70.5h6l-3 3.500z" fill="#444"/>
<path d="M838.500 69l2.500-2.500h7.500v7l-2 2.500h-8z" fill="#2a8a80" stroke="#1a3a38" stroke-width="1"/><path d="M848 71.500h14" stroke="#2a2d6a" stroke-width="2.600"/><path d="M852 71.500h10" stroke="#7a80b0" stroke-width=".8"/>
<path d="M868 70.5h6l-3 3.500z" fill="#444"/>
<circle cx="797.5" cy="94.5" r="2" fill="#fff" stroke="#c86030" stroke-width="1.200"/>
<circle cx="804.5" cy="94.5" r="2" fill="#fff" stroke="#c86030" stroke-width="1.200"/>
<circle cx="811.5" cy="94.5" r="2" fill="#fff" stroke="#c86030" stroke-width="1.200"/>
<circle cx="799.5" cy="102.5" r="2" fill="#fff" stroke="#c86030" stroke-width="1.200"/>
<circle cx="813.5" cy="102.5" r="2" fill="#fff" stroke="#c86030" stroke-width="1.200"/>
<circle cx="802.5" cy="108.5" r="2" fill="#fff" stroke="#c86030" stroke-width="1.200"/>
<circle cx="809.5" cy="108.5" r="2" fill="#fff" stroke="#c86030" stroke-width="1.200"/>
<circle cx="816.5" cy="108.5" r="2" fill="#fff" stroke="#c86030" stroke-width="1.200"/>
<path d="M795 98h19M800 112h19" stroke="#1f4a66" stroke-width="1.600"/>
<path d="M838 108h18l8-11v-2h-2v2h-11v-2h-2v2l-10 9z" fill="#8aa4b0" stroke="#1f4a66" stroke-width="1.400"/><path d="M838 106v4h18v-4" fill="none" stroke="#1f4a66" stroke-width="1.400"/>
<path d="M807.500 124l-8 11h16z" fill="#b8c4cc" stroke="#3a3d6a" stroke-width="1.200"/><circle cx="807.500" cy="123" r="1.800" fill="#fff" stroke="#3a3d6a"/><circle cx="800" cy="135.500" r="2" fill="#fff" stroke="#3a3d6a"/><circle cx="815" cy="135.500" r="2" fill="#fff" stroke="#3a3d6a"/><path d="M797 138.500h22" stroke="#3a3d6a" stroke-width="1.500"/><path d="M799 139l-2 3M803 139l-2 3M807 139l-2 3M811 139l-2 3M815 139l-2 3M819 139l-2 3" stroke="#3a3d6a" stroke-width=".8"/>
<path d="M839.500 126v8M860.500 126v8M839.500 130h21M850 131v10M846.500 141h7" stroke="#1f4a66" stroke-width="1.700" fill="none"/><circle cx="850" cy="130" r="2.800" fill="#fff" stroke="#1f4a66" stroke-width="1.500"/>
<path d="M868 130.5h6l-3 3.500z" fill="#444"/>
<path d="M902 69c0-2 2-2 3-2h6v-5h6v5h6c2 0 3 0 3 2z" fill="#b83038"/><path d="M891.500 70h46v17h-6v-8c0-3-2-4-4-4h-26c-3 0-4 2-4 4v8h-6z" fill="#3a4a8c"/><path d="M891.500 87h6v6c0 3 2 4 4 4h26c3 0 4-2 4-4v-6h6v17h-46z" fill="#c82838"/><path d="M902 104h24c0 3-2 3-4 3h-5v5h-6v-5h-5c-2 0-4 0-4-3z" fill="#1f4050"/><path d="M915 95.500h22M926 85v22" stroke="#f4e018" stroke-width="6"/><path d="M915 98.500h8v8" fill="none" stroke="#b89808" stroke-width=".8"/>
<rect x="949.500" y="57.500" width="33" height="28" rx="2.500" fill="url(#gOr)" stroke="#c89038"/><text x="952" y="77" font-family="Liberation Serif,serif" font-size="21" fill="#2a7aa0" textLength="24" lengthAdjust="spacingAndGlyphs">CC</text><text x="961" y="81" font-family="Liberation Serif,serif" font-weight="bold" font-size="7" fill="#2a2a40">1</text><text x="973" y="81" font-family="Liberation Serif,serif" font-weight="bold" font-size="7" fill="#2a2a40">2</text>
<path d="M955 108V93" stroke="#3a44a0" stroke-width="2.500"/><path d="M951.500 95h7l-3.500-5z" fill="#3a44a0"/><rect x="959.500" y="96.500" width="16" height="3.500" fill="#b8c4c0" stroke="#1f4a66" stroke-width=".8"/><path d="M962 100l3 1.500-5 1.500 5 1.500-5 1.500 3 1.500M971 100l3 1.500-5 1.500 5 1.500-5 1.500 3 1.500" fill="none" stroke="#1f4a66" stroke-width="1"/><path d="M959 109.500h17" stroke="#2a2d5a" stroke-width="1.500"/><path d="M960 112l2-2M964 112l2-2M968 112l2-2M972 112l2-2M976 112l2-2" stroke="#2a2d5a" stroke-width=".7"/>
<rect x="952" y="132" width="24" height="11" fill="#c8c8b0"/><path d="M952 132.500h24" stroke="#8a8a78" stroke-width=".8" stroke-dasharray="1.500 1"/><path d="M964 131v10" stroke="#1f4a66" stroke-width="3"/><path d="M962.500 139h3l-1.500 4z" fill="#1f4a66"/><path d="M956 130c0-9 16-9 16 0" fill="none" stroke="#3a44a0" stroke-width="1.800"/><path d="M953.500 127.500h5l-2 4zM964 121v9M961.500 127h5l-2.500 4z" fill="#3a44a0" stroke="#3a44a0" stroke-width=".8"/>
<path d="M1008 70l7-4 28 0 4 4v5l-26 0v30l-6 0-7-5z" fill="#d8e4ec" stroke="#2a4a60" stroke-width="1"/><path d="M1010 70.500l26 19-6 5-15-12v22" fill="none" stroke="#2a4a60" stroke-width="1"/><path d="M1012 72l24 18M1016 70h28M1013 76v26M1018 80v24" stroke="#d08088" stroke-width="2.500" opacity=".75"/><path d="M1011 62v9M1014.500 62v9M1028 90l8 8M1032 88l8 8" stroke="#d01818" stroke-width="1.500"/>
<path d="M1090 97l30-32 5 4-27 36c-3 3-10-4-8-8z" fill="#f0b010" stroke="#b07808" stroke-width=".8"/><path d="M1093 99l28-31" stroke="#f8d868" stroke-width="1.500"/><path d="M1104 66c6-6 16-6 22-1l10 7-4 6-8-6-4 1-4 5-6-4 3-5c-3-2-6-2-9-3z" fill="#b8bcc4" stroke="#6a6e78" stroke-width=".8"/><path d="M1108 65c6-3 12-3 17 1" stroke="#f0f0f4" stroke-width="1.300" fill="none"/>
<path d="M1151.500 66.500l7-5.500h14l-7 5.500zM1165.500 66.500l7-5.500v14l-7 6z" fill="#a8b8b0" stroke="#3a4a50" stroke-width=".9"/><rect x="1151.500" y="66.500" width="14" height="14.500" fill="#e4e8e4" stroke="#3a4a50" stroke-width=".9"/><path d="M1153 72l3-3M1158 72l3-3M1151 82l3-3M1156 82l3-3M1161 82l3-3" stroke="#e02040" stroke-width="1.500"/>
<path d="M1179.5 70.5h6l-3 3.500z" fill="#444"/>
<path d="M1153 94l4-3h13l-4 3zM1153 112l4-3h13l-4 3zM1158 95h4v15h-4z" fill="#8aa0a8" stroke="#2a3a48" stroke-width=".8"/><path d="M1162 95l4-2v15l-4 2z" fill="#5a7078"/>
<rect x="1151.5" y="124.5" width="20" height="15" fill="#e8d4c0" stroke="#a88860" stroke-width=".8"/><rect x="1152.5" y="125.5" width="18" height="2.2" fill="#d8b8a0"/><path d="M1158.1 124.5v3.8" stroke="#f0e4d8" stroke-width="1.300"/><path d="M1164.7 124.5v3.8" stroke="#f0e4d8" stroke-width="1.300"/><rect x="1152.5" y="129.2" width="18" height="2.2" fill="#d8b8a0"/><path d="M1161.5 128.2v3.8" stroke="#f0e4d8" stroke-width="1.300"/><rect x="1152.5" y="133.0" width="18" height="2.2" fill="#d8b8a0"/><path d="M1158.1 132.0v3.8" stroke="#f0e4d8" stroke-width="1.300"/><path d="M1164.7 132.0v3.8" stroke="#f0e4d8" stroke-width="1.300"/><rect x="1152.5" y="136.8" width="18" height="2.2" fill="#d8b8a0"/><path d="M1161.5 135.8v3.8" stroke="#f0e4d8" stroke-width="1.300"/>
<path d="M1179.5 130.5h6l-3 3.500z" fill="#444"/>
<path d="M1191.500 80v54" stroke="#a8acb4" stroke-width="1"/><path d="M1192.500 80v54" stroke="#f0f2f4" stroke-width="1"/>
<path d="M1206 97l30-12 12 4-31 13z" fill="#c0d098" stroke="#8a9a58" stroke-width=".8"/><path d="M1206 97v5l11 5v-5zM1217 102v5l31-13v-5z" fill="#a0b070" stroke="#8a9a58" stroke-width=".6"/><path d="M1206.500 77l9-11v30l-9 1z" fill="#2a3a88"/><path d="M1215.500 66l5 1.500v26l-5 2.500z" fill="#8a9ad8" stroke="#2a3a88" stroke-width=".7"/><path d="M1206.500 77l9-11 5 1.500" fill="none" stroke="#6a7ac8" stroke-width="1"/><rect x="1231.500" y="76.500" width="5.500" height="20" rx="1" fill="#d02858" stroke="#80102a" stroke-width=".7"/>
<path d="M1261 63l18 18" stroke="#1f4a66" stroke-width="2.500"/><path d="M1267 69l6 6" stroke="#c82838" stroke-width="2.500"/><path d="M1273 75l5 5" stroke="#f4d818" stroke-width="2.500"/><path d="M1270 67.500h11M1275.500 62v11" stroke="#3a44a0" stroke-width="2.600"/>
<path d="M1293 64l3-3h11l-3 3zM1304 64l3-3v12l-3 3z" fill="#e8f0f4" stroke="#1f4a66" stroke-width=".9"/><rect x="1293" y="64" width="11" height="12" fill="#e8f0f4" stroke="#1f4a66" stroke-width=".9"/><path d="M1296.500 64v12M1300.500 64v12M1293 68h11M1293 72h11" stroke="#1f4a66" stroke-width=".8"/><path d="M1299 76c0 5 3 6 8 6" fill="none" stroke="#3a44a0" stroke-width="1.800"/><path d="M1306 79l4 3-4 3z" fill="#3a44a0"/><path d="M1313.500 65v17" stroke="#1f4a66" stroke-width="1.500"/><circle cx="1313.500" cy="64.500" r="1.700" fill="#a8c870" stroke="#4a7a30" stroke-width=".7"/><circle cx="1313.500" cy="82" r="1.700" fill="#a8c870" stroke="#4a7a30" stroke-width=".7"/>
<path d="M1322 70.5h6l-3 3.500z" fill="#444"/>
<path d="M1260 94l17 17M1265 92l17 17M1271 91l12 12" stroke="#1f4a66" stroke-width="2.500"/><path d="M1260 94l17 17M1265 92l17 17M1271 91l12 12" stroke="#5a8aa0" stroke-width=".8"/><path d="M1258 108.500h11M1263.500 103v11" stroke="#3a44a0" stroke-width="2.600"/>
<path d="M1294 101l5-7h15l-5 7z" fill="#dcd4f4"/><path d="M1296.500 100l4-5.500h12l-4 5.500z" fill="#e8e8f0" stroke="#f08010" stroke-width="1.600"/><rect x="1303" y="96.500" width="2.500" height="2" fill="#2a2a50"/><path d="M1304.500 101v11" stroke="#3a3d6a" stroke-width="2.500"/><path d="M1302 103.500h5" stroke="#8a8aa8" stroke-width="1"/>
<path d="M1322 100.5h6l-3 3.500z" fill="#444"/>
<path d="M1262 128h9l-4.500 5z" fill="#a83838"/><path d="M1262 144h9l-4.500-5z" fill="#2a8a58"/><path d="M1260 136h21" stroke="#1f4a66" stroke-width="1.800"/><circle cx="1261" cy="136" r="2" fill="#a8c870" stroke="#4a7a30" stroke-width=".7"/><path d="M1271 127.500h11M1276.500 122v11" stroke="#3a44a0" stroke-width="2.600"/>
<rect x="1292.5" y="126.5" width="15" height="15" fill="#e8d4c0" stroke="#a88860" stroke-width=".8"/><rect x="1293.5" y="127.5" width="13" height="2.2" fill="#d8b8a0"/><path d="M1297.5 126.5v3.8" stroke="#f0e4d8" stroke-width="1.300"/><path d="M1302.4 126.5v3.8" stroke="#f0e4d8" stroke-width="1.300"/><rect x="1293.5" y="131.2" width="13" height="2.2" fill="#d8b8a0"/><path d="M1300.0 130.2v3.8" stroke="#f0e4d8" stroke-width="1.300"/><rect x="1293.5" y="135.0" width="13" height="2.2" fill="#d8b8a0"/><path d="M1297.5 134.0v3.8" stroke="#f0e4d8" stroke-width="1.300"/><path d="M1302.4 134.0v3.8" stroke="#f0e4d8" stroke-width="1.300"/><rect x="1293.5" y="138.8" width="13" height="2.2" fill="#d8b8a0"/><path d="M1300.0 137.8v3.8" stroke="#f0e4d8" stroke-width="1.300"/>
<path d="M1292 130.500h16" stroke="#e01818" stroke-width="1.500"/><path d="M1313 122v7M1310 122.500h6M1309 126l4 4 4-4zM1308 130.500h10" stroke="#2a2a40" stroke-width=".9" fill="#4a4a58"/>
<path d="M1357 75l13-10v6c14-2 24 4 26 14l2 14-8 2-2-12c-2-8-9-11-18-9v6z" fill="#6a9a58" stroke="#4a7a40" stroke-width=".5" opacity=".95"/><path d="M1362 98l3-8 17-19 5 4-17 19z" fill="#f0a818" stroke="#a86808" stroke-width=".6"/><path d="M1365 90l17-19" stroke="#f8d060" stroke-width="1.500"/><path d="M1382 71l2-2c2-1 4 1 3 3l-1 2z" fill="#e05040"/><path d="M1362 98l3-8 4 4z" fill="#e8c8a0"/><path d="M1362 98l1.500-3 1.500 1.500z" fill="#222"/>
<text x="1369" y="105" font-size="31" fill="#3a3a68" textLength="30" lengthAdjust="spacingAndGlyphs">№</text>
<path d="M1438 65h8v21h4l-8 9-8-9h4z" fill="url(#gArrow)" stroke="#2a3a80" stroke-width=".5"/><circle cx="1442" cy="99.500" r="5" fill="url(#gBall)" stroke="#7a9a50" stroke-width="1"/>
<path d="M1478 68c0-4 12-4 12 0l1 14c0 1.500-14 1.500-14 0z" fill="url(#gCyl)" stroke="#7a7a84" stroke-width=".6"/><rect x="1480" y="61" width="9" height="4" rx="1" fill="#c8c8d0" stroke="#8a8a94" stroke-width=".6"/><rect x="1477" y="81" width="15" height="2.500" fill="#c0c0c8"/>
<path d="M1503 70.5h6l-3 3.500z" fill="#444"/>
<path d="M1516.5 60.5h8l4 4v14h-12z" fill="#f4f4fa" stroke="#8a8a9a" stroke-width="1"/><path d="M1524.5 60.5v4h4" fill="#e8e8f0" stroke="#8a8a9a" stroke-width="1"/>
<path d="M1521.500 62v12" stroke="#3a4a98" stroke-width="2.200"/><path d="M1518.500 73h6l-3 4.500z" fill="#3a4a98"/>
<path d="M1524.5 65.5h10l5 5v13h-15z" fill="#f4f4fa" stroke="#2a2a70" stroke-width="1"/><path d="M1534.5 65.5v5h5" fill="#e8e8f0" stroke="#2a2a70" stroke-width="1"/>
<path d="M1531.500 68v11" stroke="#3a4a98" stroke-width="2.200"/><path d="M1528.500 78h6l-3 4.500z" fill="#3a4a98"/>
<path d="M1477.5 93.0v13" stroke="#3a4a98" stroke-width="1.600"/><path d="M1475.0 105.0h5l-2.500 3.500z" fill="#3a4a98"/>
<path d="M1482.5 92.4v13" stroke="#3a4a98" stroke-width="1.600"/><path d="M1480.0 104.4h5l-2.500 3.500z" fill="#3a4a98"/>
<path d="M1487.5 91.8v13" stroke="#3a4a98" stroke-width="1.600"/><path d="M1485.0 103.8h5l-2.500 3.500z" fill="#3a4a98"/>
<path d="M1492.5 91.2v13" stroke="#3a4a98" stroke-width="1.600"/><path d="M1490.0 103.2h5l-2.500 3.500z" fill="#3a4a98"/>
<path d="M1474 111.500l21-4" stroke="#1f4a66" stroke-width="1.300"/>
<path d="M1503 100.5h6l-3 3.500z" fill="#444"/>
<path d="M1518 99l6-6v3c6-1 10 1 12 5" fill="none" stroke="#5a9a58" stroke-width="3"/><path d="M1520 107l2-4 8-8 2.500 2.500-8 8z" fill="#f0a818" stroke="#a86808" stroke-width=".5"/><path d="M1535 93l2-1 1 2z" fill="#e04040"/><path d="M1532 98l-8 8 8 8 8-8z" fill="#b8d8ff" stroke="#1e82ff" stroke-width="1"/><path d="M1532 98v16M1524.500 106h15M1528 102l8 8M1536 102l-8 8" stroke="#1e82ff" stroke-width=".7"/>
<path d="M1495 123l-14 5-1-4-6 8 9 4-1-4 14-5z" fill="#3a4a98"/><path d="M1479 121l10 16M1491 121l-10 16" stroke="#a0a0a8" stroke-width="1.300"/><ellipse cx="1479.500" cy="140" rx="2.300" ry="3.600" transform="rotate(25 1479.500 140)" fill="none" stroke="#3a9ac8" stroke-width="1.500"/><ellipse cx="1490.500" cy="140" rx="2.300" ry="3.600" transform="rotate(-25 1490.500 140)" fill="none" stroke="#3a9ac8" stroke-width="1.500"/>
<path d="M1503 130.5h6l-3 3.500z" fill="#444"/>
<path d="M1518 122h5v18h-2.500z" fill="#f8e0e0" stroke="#c01818" stroke-width="1.200"/><path d="M1518 125h5M1518.500 128h4.500M1519 131h4M1519.500 134h3.500M1520 137h3" stroke="#c01818" stroke-width="1.200"/>
<path d="M1524.5 121.5h7l4 4v15h-11z" fill="#e0e0f4" stroke="#2a4a60" stroke-width="1"/><path d="M1531.5 121.5v4h4" fill="#e8e8f0" stroke="#2a4a60" stroke-width="1"/>
<path d="M1532 125l-8 8 8 8 8-8z" fill="#b8d8ff" stroke="#1e82ff" stroke-width="1"/><path d="M1532 125v16M1524.500 133h15M1528 129l8 8M1536 129l-8 8" stroke="#1e82ff" stroke-width=".7"/>
<path d="M1566 86c0-8 12-10 20-9 10-2 22 0 24 6 1 6-8 8-16 10-8 3-16 0-22-2-4-1-6-3-6-5z" fill="#a8b8bc" opacity=".8"/><path d="M1581 80l-8-14M1581 80l19-11" stroke="#3a2a90" stroke-width="1"/><path d="M1581 80l19-11" stroke="#1a8a40" stroke-width="1.200"/><path d="M1571 64l1.500 6 4-2.500z" fill="#3a2a90"/><path d="M1603 67l-6 .5 3 4.500z" fill="#1a8a40"/><circle cx="1587.500" cy="86.500" r="3.300" fill="#e01828"/><path d="M1587.500 88v14" stroke="#d01828" stroke-width="2.200"/><path d="M1583 101h9l-4.500 6z" fill="#c01828"/><text x="1592" y="103" font-family="Liberation Serif,serif" font-weight="bold" font-size="25" fill="#222">G</text>
<g opacity="0.45"><rect x="1619.5" y="61.5" width="23" height="4" fill="#666"/><rect x="1620.0" y="62" width="3.200" height="3" fill="#c8283c"/><rect x="1623.2" y="62" width="3.200" height="3" fill="#f08818"/><rect x="1626.3" y="62" width="3.200" height="3" fill="#f4e018"/><rect x="1629.5" y="62" width="3.200" height="3" fill="#28a848"/><rect x="1632.6" y="62" width="3.200" height="3" fill="#18a0e0"/><rect x="1635.8" y="62" width="3.200" height="3" fill="#2850c8"/><rect x="1638.9" y="62" width="3.200" height="3" fill="#b83088"/></g>
<path d="M1620 68.500h10" stroke="#8a8a8a" stroke-width="1.200" stroke-dasharray="2 1"/><path d="M1633 68l1 12 2.500-3 3 5.500 1.800-1-3-5.500 4-.5z" fill="#a4a4a8"/>
<path d="M1649.5 70.5h6l-3 3.500z" fill="#666"/>
<text x="1662" y="77" font-size="14" fill="#8aa0b8" textLength="17">1.2</text><path d="M1681 64c3 4 3 10-1 14M1664 80c5-2 12 1 18-2" fill="none" stroke="#8aa0b8" stroke-width="1.200"/>
<path d="M1692.5 70.5h6l-3 3.500z" fill="#666"/>
<text x="1704" y="79" font-family="Liberation Serif,serif" font-size="24" fill="#2a2a60">Σ</text><path d="M1724.500 61v16" stroke="#3a4a98" stroke-width="4"/><path d="M1719 75h11l-5.500 7z" fill="#4a5ab0" stroke="#2a3a80" stroke-width=".5"/>
<rect x="1758.500" y="62.500" width="12" height="10" fill="#f0f0f4" stroke="#a0a0a8"/><rect x="1759" y="63" width="11" height="2" fill="#a8a0d8"/><rect x="1749.500" y="71.500" width="12" height="10" fill="#f0f0f4" stroke="#a0a0a8"/><rect x="1750" y="72" width="11" height="2" fill="#a8a0d8"/>
<path d="M1753 73a7 7 0 0 1 9 -8" fill="none" stroke="#4a8a98" stroke-width="1.800"/><path d="M1767 71a7 7 0 0 1 -9 8" fill="none" stroke="#4a8a98" stroke-width="1.800"/><path d="M1761 62l4.500 3-4.500 3z" fill="#1f3a48"/><path d="M1759 82l-4.500-3 4.500-3z" fill="#1f3a48"/>
<rect x="1616.500" y="87.500" width="33" height="29" rx="2.500" fill="url(#gOr)" stroke="#c89038"/>
<g opacity="1"><rect x="1619.5" y="91.5" width="23" height="4" fill="#666"/><rect x="1620.0" y="92" width="3.200" height="3" fill="#c8283c"/><rect x="1623.2" y="92" width="3.200" height="3" fill="#f08818"/><rect x="1626.3" y="92" width="3.200" height="3" fill="#f4e018"/><rect x="1629.5" y="92" width="3.200" height="3" fill="#28a848"/><rect x="1632.6" y="92" width="3.200" height="3" fill="#18a0e0"/><rect x="1635.8" y="92" width="3.200" height="3" fill="#2850c8"/><rect x="1638.9" y="92" width="3.200" height="3" fill="#b83088"/></g>
<path d="M1627 106a5 5 0 0 1 7 -6" fill="none" stroke="#5a8ab0" stroke-width="1.800"/><path d="M1637 104a5 5 0 0 1 -7 6" fill="none" stroke="#5a8ab0" stroke-width="1.800"/><path d="M1633 97l4.500 3-4.500 3z" fill="#1f3a58"/><path d="M1631 113l-4.500-3 4.500-3z" fill="#1f3a58"/>
<path d="M1663.500 93c5 8 12 5 21 10v8h-21z" fill="#f8e4e4"/><path d="M1663.500 93c5 8 12 5 21 10" fill="none" stroke="#d01828" stroke-width="1.800"/><path d="M1664 96v15M1667 99v12M1670 100v11M1673 101v10M1676 101v10M1679 102v9M1682 103v8" stroke="#c03040" stroke-width=".9"/><path d="M1663 111.500h22" stroke="#2a3058" stroke-width="1.800"/>
<path d="M1692.5 100.5h6l-3 3.500z" fill="#444"/>
<rect x="1706.5" y="92.5" width="9" height="9" fill="#e89848" stroke="#2a2a58" stroke-width=".8"/><rect x="1715.5" y="92.5" width="9" height="9" fill="#f8e878" stroke="#2a2a58" stroke-width=".8"/><rect x="1706.5" y="101.5" width="9" height="9" fill="#b03020" stroke="#2a2a58" stroke-width=".8"/><rect x="1715.5" y="101.5" width="9" height="9" fill="#e89848" stroke="#2a2a58" stroke-width=".8"/>
<path d="M1724.500 91v16" stroke="#3a4a98" stroke-width="4"/><path d="M1719 105h11l-5.500 7z" fill="#4a5ab0" stroke="#2a3a80" stroke-width=".5"/>
<g opacity="1"><rect x="1619.5" y="121.5" width="23" height="4" fill="#666"/><rect x="1620.0" y="122" width="3.200" height="3" fill="#c8283c"/><rect x="1623.2" y="122" width="3.200" height="3" fill="#f08818"/><rect x="1626.3" y="122" width="3.200" height="3" fill="#f4e018"/><rect x="1629.5" y="122" width="3.200" height="3" fill="#28a848"/><rect x="1632.6" y="122" width="3.200" height="3" fill="#18a0e0"/><rect x="1635.8" y="122" width="3.200" height="3" fill="#2850c8"/><rect x="1638.9" y="122" width="3.200" height="3" fill="#b83088"/></g>
<path d="M1627.5 137a5.5 5.5 0 0 1 7.5 -6.5" fill="none" stroke="#5a8ab0" stroke-width="1.800"/><path d="M1638.5 135a5.5 5.5 0 0 1 -7.5 6.5" fill="none" stroke="#5a8ab0" stroke-width="1.800"/><path d="M1634 127.5l4.500 3-4.500 3z" fill="#1f3a58"/><path d="M1632 144.5l-4.500-3 4.500-3z" fill="#1f3a58"/>
<rect x="1664.5" y="122.5" width="9" height="9" fill="#e89848" stroke="#2a2a58" stroke-width=".8"/><rect x="1673.5" y="122.5" width="9" height="9" fill="#f8e878" stroke="#2a2a58" stroke-width=".8"/><rect x="1664.5" y="131.5" width="9" height="9" fill="none" stroke="#2a2a58" stroke-width=".8"/><rect x="1673.5" y="131.5" width="9" height="9" fill="#e89848" stroke="#2a2a58" stroke-width=".8"/>
<rect x="1662" y="131.500" width="11.500" height="11" fill="#dfe5e8"/><text x="1662" y="142" font-family="Liberation Serif,serif" font-weight="bold" font-size="13" fill="#2a2a60">C</text>
<path d="M1692.5 130.5h6l-3 3.500z" fill="#444"/>
<rect x="1707.5" y="122.5" width="9" height="9" fill="#e89848" stroke="#2a2a58" stroke-width=".8"/><rect x="1716.5" y="122.5" width="9" height="9" fill="#f8e878" stroke="#2a2a58" stroke-width=".8"/><rect x="1707.5" y="131.5" width="9" height="9" fill="none" stroke="#2a2a58" stroke-width=".8"/><rect x="1716.5" y="131.5" width="9" height="9" fill="#e89848" stroke="#2a2a58" stroke-width=".8"/>
<rect x="1705" y="131.500" width="11.500" height="12" fill="#e1e6e9"/><path d="M1711.500 127v12" stroke="#1f3a58" stroke-width="3.500"/><path d="M1709.800 138h3.500l-1.800 5z" fill="#1f3a58"/>
<path d="M1735.5 130.5h6l-3 3.500z" fill="#444"/>
</svg>
<svg class="a" style="left:0;top:178px" width="27" height="722" viewBox="0 178 27 722" font-family="Liberation Sans,sans-serif">
<defs><radialGradient id="gW" cx=".5" cy=".35" r=".7"><stop offset="0" stop-color="#fff"/><stop offset=".7" stop-color="#e4e8f0"/><stop offset="1" stop-color="#9aa4b8"/></radialGradient></defs>
<path d="M5 182.500h2M9 182.500h2M13 182.500h2M17 182.500h2" stroke="#222" stroke-width="1.500"/>
<path d="M13 190l2.300 4.500 5 .5-3.700 3.500 1 5-4.600-2.500-4.600 2.500 1-5-3.700-3.500 5-.5z" fill="none" stroke="#e08890" stroke-width=".9" stroke-dasharray="1.500 1"/>
<circle cx="13" cy="221" r="8" fill="url(#gW)" stroke="#7a88a8" stroke-width=".8"/>
<path d="M5 221h16M13 213v16" stroke="#1f4a66" stroke-width="2"/><circle cx="13" cy="221" r="3.600" fill="#8ac050" stroke="#4a7a30" stroke-width=".8"/>
<path d="M11.5 234.5l4 3-4 3z" fill="#555"/>
<path d="M7 249.500h13M7 256.500h13M7.500 249v14M13.500 249v14M19.500 249v14" stroke="#1f4a66" stroke-width="1.300" fill="none"/><path d="M13.500 249.500h6v7h-6z" fill="none" stroke="#d01818" stroke-width="1.300"/>
<circle cx="7.5" cy="249.5" r="1.400" fill="#fff" stroke="#4a9a30" stroke-width=".8"/>
<circle cx="7.5" cy="256.5" r="1.400" fill="#fff" stroke="#4a9a30" stroke-width=".8"/>
<circle cx="13.5" cy="249.5" r="1.400" fill="#fff" stroke="#d01818" stroke-width=".8"/>
<circle cx="19.5" cy="249.5" r="1.400" fill="#fff" stroke="#d01818" stroke-width=".8"/>
<circle cx="13.5" cy="256.5" r="1.400" fill="#fff" stroke="#d01818" stroke-width=".8"/>
<circle cx="19.5" cy="256.5" r="1.400" fill="#fff" stroke="#d01818" stroke-width=".8"/>
<circle cx="13" cy="278.5" r="8" fill="url(#gW)" stroke="#7a88a8" stroke-width=".8"/>
<path d="M6 278.500h14" stroke="#1f4a66" stroke-width="2.200"/><circle cx="6.500" cy="278.500" r="2" fill="#8ac050" stroke="#4a7a30" stroke-width=".6"/><circle cx="19.500" cy="278.500" r="2" fill="#8ac050" stroke="#4a7a30" stroke-width=".6"/>
<path d="M11.5 291.5l4 3-4 3z" fill="#555"/>
<circle cx="13" cy="311.5" r="8" fill="url(#gW)" stroke="#7a88a8" stroke-width=".8"/>
<path d="M10.500 304.500v14M15.500 304.500v14" stroke="#1f4a66" stroke-width="2.300"/>
<circle cx="13" cy="334.5" r="8" fill="url(#gW)" stroke="#7a88a8" stroke-width=".8"/>
<path d="M6 332h14M6 337h14" stroke="#1f4a66" stroke-width="2.300"/>
<circle cx="13" cy="356.5" r="8" fill="url(#gW)" stroke="#7a88a8" stroke-width=".8"/>
<path d="M5 356.500h16M13 348.500v16" stroke="#1f4a66" stroke-width="1.800"/><circle cx="13" cy="356.500" r="3.300" fill="#8ac050" stroke="#4a7a30" stroke-width=".8"/>
<circle cx="13" cy="379" r="8" fill="url(#gW)" stroke="#7a88a8" stroke-width=".8"/>
<path d="M10.500 372v14M15.500 372v14M6 376.500h14M6 381.500h14" stroke="#1f4a66" stroke-width="1.500"/>
<path d="M11.5 392.5l4 3-4 3z" fill="#555"/>
<circle cx="13" cy="414" r="8" fill="#3a4070" stroke="#8a98c0" stroke-width="1.200"/><text x="13" y="418.500" font-size="11" font-weight="bold" fill="#e8ecf8" text-anchor="middle" textLength="12" lengthAdjust="spacingAndGlyphs">EF</text>
<path d="M11.5 427.5l4 3-4 3z" fill="#555"/>
<circle cx="13" cy="449" r="8" fill="url(#gW)" stroke="#7a88a8" stroke-width=".8"/>
<path d="M8 443l10 11" stroke="#3a5a78" stroke-width="3"/><path d="M12 447.500l5 5.500" stroke="#e8c020" stroke-width="2"/><path d="M15 451l3 3" stroke="#d02828" stroke-width="2"/>
<path d="M11.5 462.5l4 3-4 3z" fill="#555"/>
<path d="M5 487l11-2.500 5 2.500-12 3.500z" fill="#b8c888" stroke="#7a8a50" stroke-width=".7"/><path d="M5 487v2.500l4 3.500v-2.500zM9 490.500v2.500l12-3.500v-2.500z" fill="#98a868"/><path d="M5.500 478l3.500-3.500v12l-3.500.5z" fill="#2a3a88"/><path d="M9 474.500l3 1v11l-3-.5z" fill="#9aa8e0" stroke="#2a3a88" stroke-width=".6"/><rect x="15.500" y="478.500" width="3" height="9" rx="1" fill="#d02050" stroke="#801030" stroke-width=".5"/>
<path d="M5.500 499.500h15.500l-6 7v6h-3.500v-6z" fill="#d8e4ec" stroke="#3a5a70" stroke-width="1.200"/>
<rect x="5.500" y="519.500" width="7" height="7" fill="#e4ecff" stroke="#2a3a98" stroke-width="1.300"/><rect x="5.500" y="527.500" width="7" height="7" fill="#fde4ec" stroke="#d01868" stroke-width="1.300"/><path d="M15 521c5 1 5 11 0 12" fill="none" stroke="#2a8a38" stroke-width="1.300"/><path d="M16 519l-3 2 3 2zM16 531l-3 2 3 2z" fill="#2a8a38"/>
<g opacity=".5"><path d="M7 544.500h12M7 551.500h12M7.500 544v13M13.500 544v13M19.500 544v13" stroke="#d06080" stroke-width="1" fill="none"/><path d="M8 549a5.500 5.500 0 0 1 11 0" fill="none" stroke="#e06070" stroke-width="2"/><circle cx="7.500" cy="544.500" r="1.300" fill="#fff" stroke="#4a9a30"/><circle cx="19.500" cy="544.500" r="1.300" fill="#fff" stroke="#4a9a30"/><circle cx="19.500" cy="551.500" r="1.300" fill="#fff" stroke="#4a9a30"/></g>
<path d="M12 563h2.500l.5 6 2 2v3h-7.500v-3l2-2z" fill="#2a8a48" stroke="#1a5a30" stroke-width=".6"/><path d="M9.500 574l-1 4M11.500 574l-.5 4M13.500 574v4M15.500 574l.5 4M17 574l1 4" stroke="#c8b888" stroke-width="1"/>
<path d="M6 585.5h14" stroke="#f4f4f4" stroke-width="1.200"/>
<rect x="8.500" y="592.5" width="8" height="7" fill="#e4ecff" stroke="#2a6ac8" stroke-width="1.200"/><rect x="8.500" y="600.5" width="8" height="7" fill="#fde4ec" stroke="#d01868" stroke-width="1.200"/>
<path d="M6 592l13 8M19 592l-13 8" stroke="#2a7a38" stroke-width="1.200"/>
<g opacity=".5"><rect x="12.500" y="615.500" width="6" height="6" fill="#e4ecff" stroke="#4a8ac8"/><rect x="12.500" y="622.500" width="6" height="6" fill="#fde4ec" stroke="#d04888"/><path d="M7.500 618v13h11" fill="none" stroke="#667" stroke-width="1"/><path d="M13 616l5 5M18 616l-5 5" stroke="#4a9a58"/></g>
<rect x="8.500" y="638.5" width="8" height="7" fill="#e4ecff" stroke="#2a6ac8" stroke-width="1.200"/><rect x="8.500" y="646.5" width="8" height="7" fill="#fde4ec" stroke="#d01868" stroke-width="1.200"/>
<path d="M6 646l13 8M19 646l-13 8" stroke="#2a7a38" stroke-width="1.200"/>
<g opacity=".55"><rect x="11.500" y="663.500" width="7" height="7" fill="none" stroke="#d04888" stroke-width="1.200"/><path d="M7 668a6 6 0 0 1 10-5" fill="none" stroke="#6a5ab8" stroke-width="2"/><path d="M4.500 666h5.500l-2.500 4z" fill="#6a5ab8"/><path d="M13 659l6 6" stroke="#6ab0a0"/></g>
<path d="M6.500 697v-12l4-3.500h10v12M6.500 685h10v12M16.500 685l4-3.500M6.500 690.500h10l4-3.500M11 681.500v9M16.500 697v-12M20.500 693.500v-4" fill="none" stroke="#3a4a78" stroke-width="1.200"/>
<path d="M6.500 719v-12l4-3.500h10v12M6.500 707h10v12M16.500 707l4-3.500M6.500 712.500h10l4-3.500M11 703.500v9M16.500 719v-12M20.500 715.500v-4" fill="none" stroke="#3a4a78" stroke-width="1.200"/><path d="M6 710.500l4-3h10l-4 3.500z" fill="#e02828"/><path d="M6 710v3h10v-3" fill="#c01818"/>
<path d="M6 726.5h14" stroke="#f4f4f4" stroke-width="1.200"/>
<circle cx="11.500" cy="738.5" r="5" fill="#e8f2f8" stroke="#8a98a8" stroke-width="1.600"/><circle cx="10.500" cy="737.5" r="2.300" fill="#a8d0e8" opacity=".8"/><path d="M15.500 742.5l5 5" stroke="#1a1a1a" stroke-width="2.600" stroke-linecap="round"/>
<circle cx="11.500" cy="760.5" r="5" fill="#e8f2f8" stroke="#8a98a8" stroke-width="1.600"/><circle cx="10.500" cy="759.5" r="2.300" fill="#a8d0e8" opacity=".8"/><path d="M15.500 764.5l5 5" stroke="#1a1a1a" stroke-width="2.600" stroke-linecap="round"/>
<path d="M11 758l8 7M19 758l-8 7" stroke="#d81818" stroke-width="2.200"/>
<path d="M6 778h14" stroke="#f4f4f4" stroke-width="1.200"/>
<path d="M7 785l4-1.500 6 7-4 2.500z" fill="#6a6a6a" stroke="#3a3a3a" stroke-width=".6"/><path d="M12 794l6-5 3 6c0 3-3 5.500-7 5z" fill="#f8e828"/><path d="M12 794l6-5 1 2-6 5z" fill="#e85828"/>
<text x="9" y="819" font-family="Liberation Serif,serif" font-style="italic" font-size="13" fill="#1f4a66">L</text><path d="M6.500 823.500h14" stroke="#1f4a66" stroke-width="1" stroke-dasharray="2 1.300"/><circle cx="6" cy="823.500" r="1.300" fill="#fff" stroke="#5a9a30" stroke-width=".8"/><circle cx="20.500" cy="823.500" r="1.300" fill="#fff" stroke="#5a9a30" stroke-width=".8"/>
<path d="M11.5 829.5l4 3-4 3z" fill="#555"/>
<path d="M5 857l1.500-4.500 12-10.500 3 3-12 10.500z" fill="#f4c818" stroke="#b08808" stroke-width=".6"/><path d="M5 857l1.500-4.500 3 3z" fill="#f0c8a0"/><path d="M18.500 842l1.500-1 3 3-1.500 1z" fill="#e86060"/>
<path d="M7 866c4-2 8 1 12-1v8c-4 2-8-1-12 1z" fill="#e02020"/><path d="M9 879l1-3 7-6 2 2-7 6z" fill="#f4c818" stroke="#b08808" stroke-width=".5"/><path d="M9 879l1-3 2 2z" fill="#f0c8a0"/>
<path d="M0 883.500h25.500v9c0 3-2 4-4 4H3c-2 0-3-1-3-3z" fill="#5a6070"/><path d="M0 883.500h25.500v5H0z" fill="#7a8090" opacity=".6"/><path d="M16.500 886.500v7" stroke="#fff" stroke-width="1.300"/><path d="M18.500 886.500l4 3.500-4 3.500z" fill="#fff"/>
</svg>
<svg class="a" style="left:1893px;top:178px" width="27" height="480" viewBox="1893 178 27 480" font-family="Liberation Sans,sans-serif">
<path d="M1900 182.500h2M1904 182.500h2M1908 182.500h2M1912 182.500h2" stroke="#222" stroke-width="1.500"/>
<path d="M1901.500 204v-13" stroke="#d01828" stroke-width="1.300"/><path d="M1899 193l2.500-4 2.500 4z" fill="#d01828"/><path d="M1901.500 204h12" stroke="#1a8a40" stroke-width="1.300"/><path d="M1912 201.500l4 2.500-4 2.500z" fill="#1a8a40"/><path d="M1901.500 204l9-9" stroke="#2a2a90" stroke-width="1.300"/><path d="M1908 194l4.500-1.500-1.500 4.500z" fill="#2a2a90"/>
<rect x="1897.500" y="210.5" width="21" height="19" rx="2" fill="#f8c060" stroke="#e0a040"/><rect x="1898" y="211" width="20" height="8" rx="2" fill="#fcdc9c" opacity=".8"/>
<path d="M1908 224v-10" stroke="#d01828" stroke-width="1.400"/><path d="M1905.500 216l2.500-4 2.500 4z" fill="#d01828"/><path d="M1908 224l7-3" stroke="#1a8a40" stroke-width="1.400"/><path d="M1913 219l4.500 1-3 3.500z" fill="#1a8a40"/><path d="M1908 224l-7-3" stroke="#2a2a90" stroke-width="1.400"/><path d="M1903 219l-4.500 1 3 3.500z" fill="#2a2a90"/>
<path d="M1901.5 248v-13" stroke="#d01828" stroke-width="1.300"/><path d="M1899.0 237l2.500-4 2.500 4z" fill="#d01828"/><path d="M1901.5 248h12" stroke="#1a8a40" stroke-width="1.300"/><path d="M1912.5 245.5l4 2.500-4 2.500z" fill="#1a8a40"/><circle cx="1901.5" cy="248" r="1.800" fill="#2a2a90"/><text x="1903.5" y="244" font-size="8.500" fill="#222" textLength="9.500" lengthAdjust="spacingAndGlyphs">XZ</text>
<path d="M1906 256.5l4 3-4 3z" fill="#555"/>
<path d="M1901.5 282v-13" stroke="#2a2a90" stroke-width="1.300"/><path d="M1899.0 271l2.500-4 2.500 4z" fill="#2a2a90"/><path d="M1901.5 282h12" stroke="#1a8a40" stroke-width="1.300"/><path d="M1912.5 279.5l4 2.500-4 2.500z" fill="#1a8a40"/><circle cx="1901.5" cy="282" r="1.800" fill="#d01828"/><text x="1903.5" y="278" font-size="8.500" fill="#222" textLength="9.500" lengthAdjust="spacingAndGlyphs">XY</text>
<path d="M1906 291.5l4 3-4 3z" fill="#555"/>
<path d="M1901.5 317v-13" stroke="#d01828" stroke-width="1.300"/><path d="M1899.0 306l2.500-4 2.500 4z" fill="#d01828"/><path d="M1901.5 317h12" stroke="#2a2a90" stroke-width="1.300"/><path d="M1912.5 314.5l4 2.500-4 2.500z" fill="#2a2a90"/><circle cx="1901.5" cy="317" r="1.800" fill="#1a8a40"/><text x="1903.5" y="313" font-size="8.500" fill="#222" textLength="9.500" lengthAdjust="spacingAndGlyphs">YZ</text>
<path d="M1906 326.5l4 3-4 3z" fill="#555"/>
<path d="M1900 352l4-9h13l-4 9z" fill="#e0e8f4" opacity=".9"/><path d="M1903 350.500l3-6.500M1907.500 350.500l3-6.500M1912 350.500l3-6.500M1903.500 347.500h12M1904 344.500h11" stroke="#2a2a70" stroke-width="1.100" fill="none"/>
<path d="M1906 376v-14" stroke="#d01828" stroke-width="1.300"/><path d="M1903.500 364l2.500-4 2.500 4z" fill="#d01828"/><path d="M1900 370c0 5 12 5 12 0" fill="none" stroke="#2a3a98" stroke-width="1.400"/><path d="M1910 368l3 1-1 3z" fill="#2a3a98"/><text x="1910" y="367" font-size="8.500" fill="#222">Z</text>
<path d="M1906 383.5l4 3-4 3z" fill="#555"/>
<path d="M1901.500 411v-13M1901.500 411h12M1901.500 411l9-9" stroke="#d01828" stroke-width="1.300"/><path d="M1899 400l2.500-4 2.500 4zM1912 408.500l4 2.500-4 2.500zM1908 401l4.500-1.500-1.500 4.500z" fill="#d01828"/>
<path d="M1895 416.5h25v9c0 2-1 3-3 3h-19c-2 0-3-1-3-3z" fill="#5a6070"/><path d="M1895 416.5h25v4h-25z" fill="#7a8090" opacity=".6"/><path d="M1911.500 419.0v7" stroke="#fff" stroke-width="1.200"/><path d="M1913.500 419.0l4 3.500-4 3.500z" fill="#fff"/>
<path d="M1900 433.500h2M1904 433.500h2M1908 433.500h2M1912 433.500h2" stroke="#222" stroke-width="1.500"/>
<rect x="1897.500" y="439.5" width="21" height="19" rx="2" fill="#f8c060" stroke="#e0a040"/><rect x="1898" y="440" width="20" height="8" rx="2" fill="#fcdc9c" opacity=".8"/>
<path d="M1908 453v-10" stroke="#d01828" stroke-width="1.400"/><path d="M1905.500 445l2.500-4 2.500 4z" fill="#d01828"/><path d="M1908 453l7-3" stroke="#1a8a40" stroke-width="1.400"/><path d="M1913 448l4.500 1-3 3.500z" fill="#1a8a40"/><path d="M1908 453l-7-3" stroke="#2a2a90" stroke-width="1.400"/><path d="M1903 448l-4.500 1 3 3.500z" fill="#2a2a90"/>
<path d="M1903 464l3-3h10l-3 3z" fill="#fde8e8" stroke="#e01828" stroke-width="1.200"/>
<path d="M1901.5 471.5h9.0v9.0h-9.0z" fill="#c8d4e4" stroke="#2a3048" stroke-width="1.200"/><path d="M1901.5 471.5l3-3h9.0l-3 3z" fill="#e4ecf4" stroke="#2a3048" stroke-width="1"/><path d="M1910.5 471.5l3-3v9.0l-3 3z" fill="#8a98b0" stroke="#2a3048" stroke-width="1"/>
<rect x="1908.500" y="484.500" width="8" height="8" fill="#e8f4ff" stroke="#1890e0" stroke-width="1.400"/>
<path d="M1899.5 495.5h9.0v9.0h-9.0z" fill="#c8d4e4" stroke="#2a3048" stroke-width="1.200"/><path d="M1899.5 495.5l3-3h9.0l-3 3z" fill="#e4ecf4" stroke="#2a3048" stroke-width="1"/><path d="M1908.5 495.5l3-3v9.0l-3 3z" fill="#8a98b0" stroke="#2a3048" stroke-width="1"/>
<path d="M1900 512l3-3v10l-3 3z" fill="#d8f4d8" stroke="#28a838" stroke-width="1.200"/>
<path d="M1902.5 514.5h9.0v9.0h-9.0z" fill="#c8d4e4" stroke="#2a3048" stroke-width="1.200"/><path d="M1902.5 514.5l3-3h9.0l-3 3z" fill="#e4ecf4" stroke="#2a3048" stroke-width="1"/><path d="M1911.5 514.5l3-3v9.0l-3 3z" fill="#8a98b0" stroke="#2a3048" stroke-width="1"/>
<circle cx="1905.500" cy="534" r="5" fill="#e8f2f8" stroke="#8a98a8" stroke-width="1.600"/><circle cx="1904.500" cy="533" r="2.300" fill="#a8d0e8" opacity=".8"/><path d="M1909.500 538l5 5" stroke="#1a1a1a" stroke-width="2.600" stroke-linecap="round"/><path d="M1905 532l8 7M1913 532l-8 7" stroke="#d81818" stroke-width="2.200"/>
<path d="M1899.5 557.5h9.0v9.0h-9.0z" fill="#c8d4e4" stroke="#2a3048" stroke-width="1.200"/><path d="M1899.5 557.5l3-3h9.0l-3 3z" fill="#e4ecf4" stroke="#2a3048" stroke-width="1"/><path d="M1908.5 557.5l3-3v9.0l-3 3z" fill="#8a98b0" stroke="#2a3048" stroke-width="1"/>
<path d="M1913 557l3-3v10l-3 3z" fill="#d8f4d8" stroke="#28a838" stroke-width="1.200"/>
<path d="M1903.5 575.5h9.0v9.0h-9.0z" fill="#c8d4e4" stroke="#2a3048" stroke-width="1.200"/><path d="M1903.5 575.5l3-3h9.0l-3 3z" fill="#e4ecf4" stroke="#2a3048" stroke-width="1"/><path d="M1912.5 575.5l3-3v9.0l-3 3z" fill="#8a98b0" stroke="#2a3048" stroke-width="1"/>
<rect x="1899.500" y="579.500" width="9" height="9" fill="#e8f4ff" stroke="#1890e0" stroke-width="1.400"/>
<path d="M1901.5 598.5h9.0v9.0h-9.0z" fill="#c8d4e4" stroke="#2a3048" stroke-width="1.200"/><path d="M1901.5 598.5l3-3h9.0l-3 3z" fill="#e4ecf4" stroke="#2a3048" stroke-width="1"/><path d="M1910.5 598.5l3-3v9.0l-3 3z" fill="#8a98b0" stroke="#2a3048" stroke-width="1"/>
<path d="M1901 612l3-2.500h10l-3 2.500z" fill="#fde8e8" stroke="#e01828" stroke-width="1.200"/>
<path d="M1908 617l6.500 3.500v7.500l-6.500 3.500-6.500-3.500v-7.500z" fill="#d0dce8" stroke="#3a4a60" stroke-width="1"/><path d="M1901.500 620.500l6.500 3.500 6.500-3.500M1908 624v8" fill="none" stroke="#3a4a60" stroke-width="1"/><path d="M1908 616l-7.500 4" stroke="#28a838" stroke-width="1.200"/><path d="M1908 616l7.500 4" stroke="#2a5ad0" stroke-width="1.200"/><path d="M1901 629l7 4 7-4" fill="none" stroke="#e01828" stroke-width="1.200"/>
<path d="M1895 637.5h25v9c0 2-1 3-3 3h-19c-2 0-3-1-3-3z" fill="#5a6070"/><path d="M1895 637.5h25v4h-25z" fill="#7a8090" opacity=".6"/><path d="M1911.500 640.0v7" stroke="#fff" stroke-width="1.200"/><path d="M1913.500 640.0l4 3.500-4 3.500z" fill="#fff"/>
</svg>
</body></html>
